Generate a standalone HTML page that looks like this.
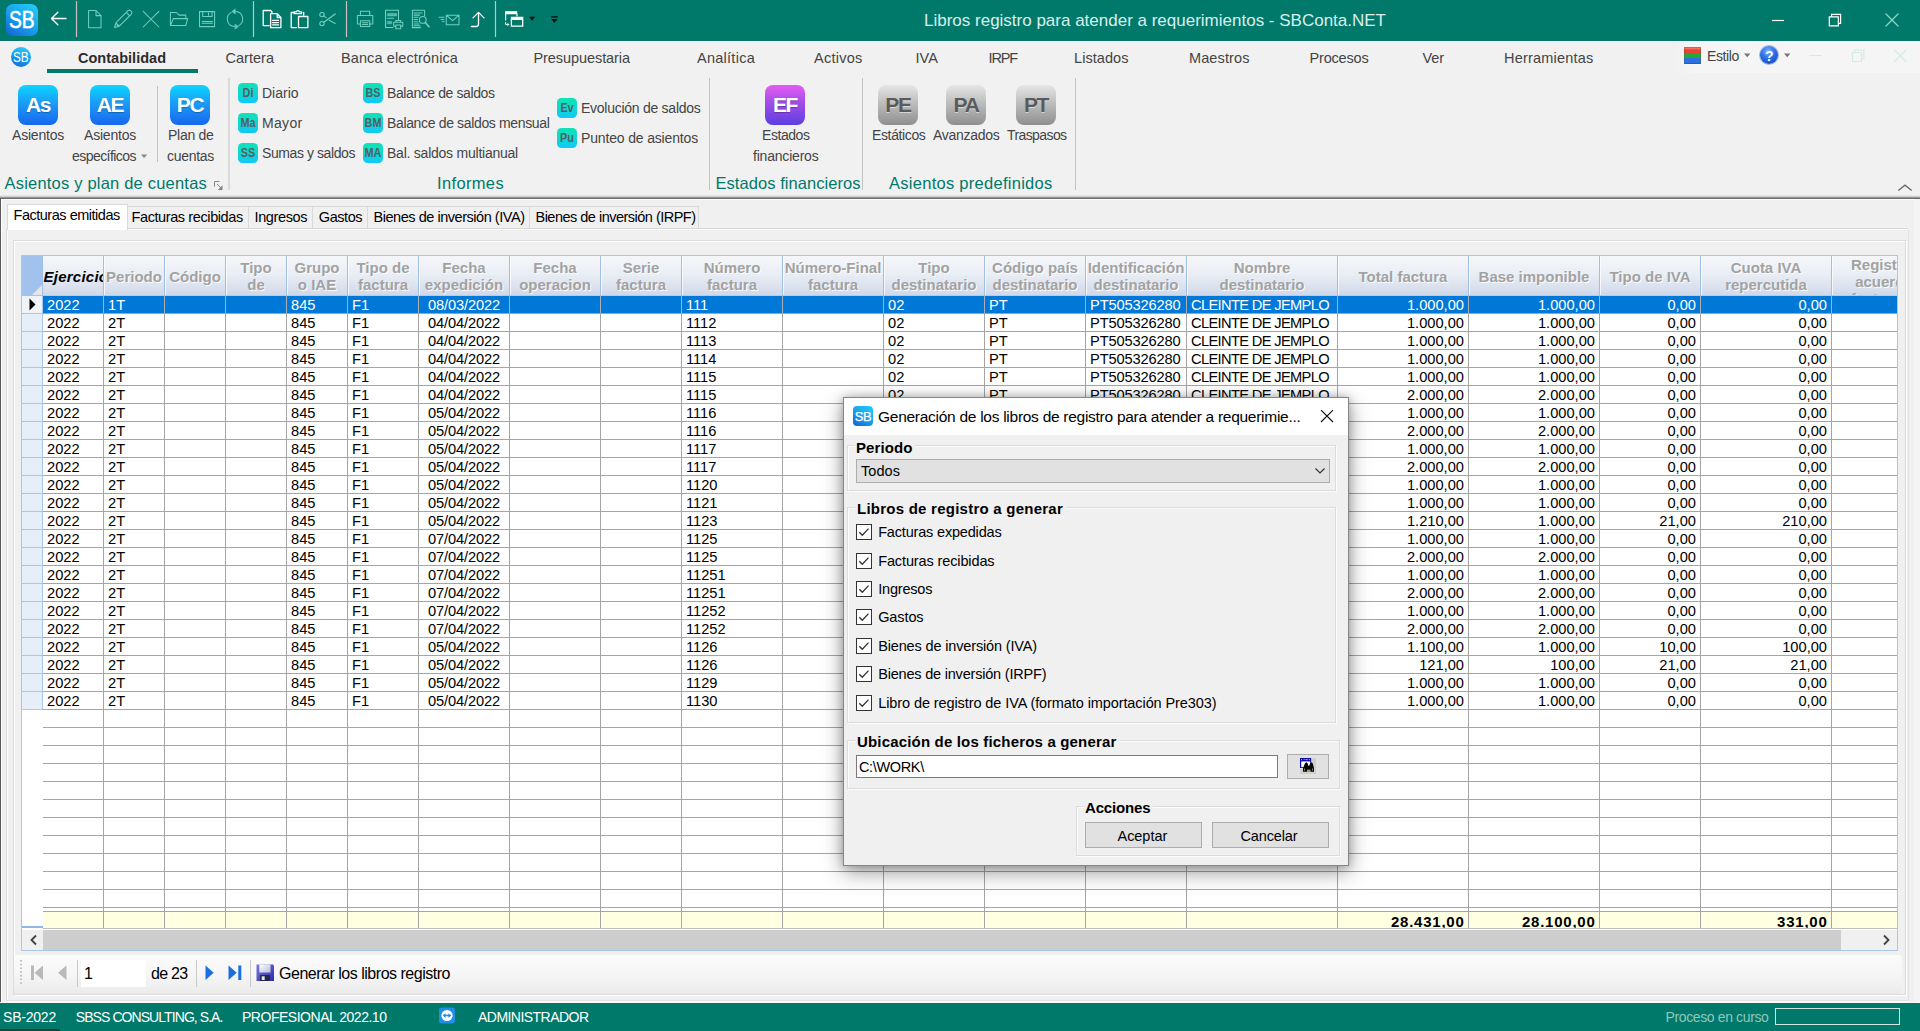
<!DOCTYPE html>
<html lang="es"><head><meta charset="utf-8"><title>Libros registro para atender a requerimientos - SBConta.NET</title>
<style>
html,body{margin:0;padding:0;}
body{width:1920px;height:1031px;overflow:hidden;background:#f0f0f0;position:relative;font-family:"Liberation Sans",sans-serif;}
.t{position:absolute;white-space:pre;}
svg{position:absolute;overflow:visible;}
.abs{position:absolute;}
</style></head><body>

<div class="" style="position:absolute;left:0px;top:0px;width:1920px;height:41px;background:#00796b;"></div>
<div class="" style="position:absolute;left:6px;top:4px;width:32px;height:32px;border-radius:7px;background:linear-gradient(215deg,#25d0f7 0%,#1aa6ee 45%,#1461d6 100%);"></div>
<span class="t" style="left:9.4px;top:6.5px;font-size:23.5px;line-height:26px;color:#fff;transform-origin:0 50%;transform:scaleX(0.817);-webkit-text-stroke:0.550px #fff;">SB</span>
<svg width="1920" height="41" viewBox="0 0 1920 41" style="left:0;top:0" fill="none" stroke-linecap="round" stroke-linejoin="round"><path d="M76.5 1V37" stroke="#cdbfbf" stroke-width="1.2" stroke-linecap="butt"/><path d="M253.5 1V37" stroke="#cdbfbf" stroke-width="1.2" stroke-linecap="butt"/><path d="M346.5 1V37" stroke="#cdbfbf" stroke-width="1.2" stroke-linecap="butt"/><path d="M495.5 1V37" stroke="#cdbfbf" stroke-width="1.2" stroke-linecap="butt"/><path d="M51.500 18.500H66 M57.800 12.200L51.500 18.500L57.800 24.800" stroke="#fff" stroke-width="1.400"/><g stroke="#70cfc0" stroke-width="1.050"><path d="M88.600 10.500h7.400l5 5.100v12.100h-12.400z M96 10.500v5.100h5"/><path d="M114.600 27.500l1.300-4.700L128 10.700a1.900 1.900 0 0 1 2.600 0l.8.800a1.900 1.900 0 0 1 0 2.600L119.300 26.200z M115.900 22.800l3.400 3.400 M117 24.900l1 1 M126.300 12.400l3.400 3.400"/><path d="M143.200 11.400L158.900 27 M158.900 11.400L143.200 27"/><path d="M170.400 25.500V12.500h6l2.600 2.600h6.800v2.900 M170.400 25.500l3-6.900h14.300l-2 6.900z"/><path d="M199.500 11.600h15.100v15h-15.100z M202.700 11.600v4.800h9.300v-4.800 M208.500 13v2.300 M202.200 21.400h10.200 M202.200 23.200h10.200"/><path d="M231.200 12.400A7.600 7.600 0 0 0 234.300 26.600 M238.800 25.600A7.600 7.600 0 0 0 235.700 11.400"/><path d="M235.300 24.200l3 2.400-3 2.400z M235 9l-3 2.400 3 2.400z" fill="#70cfc0" stroke-width="0.600"/></g><g stroke="#fff" stroke-width="1.300"><path d="M269.200 25.600h-6V10.500h7.500l1.200 1.200v1.600 M270.600 13.700h6.600l3.700 3.800v10.200h-10.300z M277.200 13.700v3.800h3.700 M272.500 20.400h6 M272.500 22.600h6 M272.500 24.800h6"/><path d="M294 12.500h-2.800v15.100h5.300 M303.700 12.500v2.600 M294.100 13.600v-1.800h2.300a1.500 1.500 0 0 1 2.900 0h2.300v1.800z M298.500 16.500h9.400v11.100h-9.400z"/></g><g stroke="#70cfc0" stroke-width="1.050"><circle cx="322" cy="14.600" r="2.200"/><circle cx="322" cy="23.600" r="2.200"/><path d="M323.800 22.300L335.200 14" stroke-width="1.300"/><path d="M323.800 15.900l2.600 1.900 M329.200 20.300l6 3.200"/><path d="M360.400 15.500v-4.200h9.300v4.200 M360.400 23.900h-3v-8.400h15.400v8.400h-3 M360.400 20.800h9.300v5.800h-9.300z M362.300 22.700h5.500 M362.300 24.500h5.500"/><path d="M393 27.500h-7.500V10.300h13v9.800 M387.400 18.200h6.200"/><path d="M387.600 13.400h9v2.500h-9z M387.600 21.400h4v2.400h-4z" fill="#70cfc0" fill-opacity="0.700" stroke-width="0.500"/><path d="M395.800 22.200v-1.800h4.900v1.800 M395.800 26.300h-2.100v-4.100h9.100v4.100h-2.100 M395.800 25h4.900v3.700h-4.900z"/><path d="M420.500 27.600h-8.100V10.300h12.200v5.500 M414 12.900h8 M414 15.100h5.500 M414 17.300h4 M414 19.500h3.500 M414 21.700h4 M414 23.900h5 M414 25.700h6"/><circle cx="422.800" cy="19.900" r="3.400"/><path d="M425.300 22.400l3.700 4.400" stroke-width="1.600"/><path d="M446.300 15.200h12.700v9.600h-12.700z M446.300 15.200l6.350 5.500 6.350-5.500 M439.200 17.300h4.800 M441 19.400h3 M442.500 21.500h1.500"/></g><path d="M471.300 26.500h4.700q2.500 0 2.500-2.500V12.500 M473 17.900l5.500-5.500 5.500 5.500" stroke="#fff" stroke-width="1.300"/><g stroke="#fff" stroke-width="1.200" stroke-linejoin="miter" stroke-linecap="butt"><path d="M505.600 11.800h11v1.800h-11z" fill="#fff"/><path d="M505.600 13.600v7 M517 13.600v3"/><path d="M511.400 17.300h11.300v2h-11.300z" fill="#fff"/><path d="M511.400 19.300v6.800h11.300v-6.800" stroke-width="1.300"/><path d="M505.600 22.200v2.300h2.300" stroke-width="1"/><path d="M507.400 22.800l2 1.700-2 1.700z" fill="#fff" stroke="none"/></g><path d="M529 16.800h6.200l-3.100 3.900z" fill="#0c0c0c" stroke="none"/><path d="M551.200 19h6.600l-3.300 3.800z" fill="#0c0c0c" stroke="none"/><path d="M551.200 16.900h6.600" stroke="#0c0c0c" stroke-width="1.300" stroke-linecap="butt"/><path d="M1772 20.500h12" stroke="#fff" stroke-width="1.200" stroke-linecap="butt"/><path d="M1829.300 16.800h9v9h-9z M1831.600 16.600v-2.300h9v9h-2.100" stroke="#fff" stroke-width="1.200" stroke-linejoin="miter"/><path d="M1886 14l12 12 M1898 14l-12 12" stroke="#8fd8cc" stroke-width="1.200"/></svg>
<span class="t " style="left:924.0px;top:9.7px;font-size:17px;line-height:22px;color:#d9efeb;letter-spacing:-0.001px;">Libros registro para atender a requerimientos - SBConta.NET</span>
<div class="" style="position:absolute;left:0px;top:41px;width:1920px;height:155px;background:#f1f1f1;"></div>
<div class="" style="position:absolute;left:0px;top:41px;width:1920px;height:1px;background:#f9f9f9;"></div>
<div class="" style="position:absolute;left:1674px;top:42px;width:246px;height:31px;background:linear-gradient(90deg,#f1f1f1,#f5f5f5 8%,#f5f5f5);"></div>
<div class="" style="position:absolute;left:0px;top:195px;width:1920px;height:4px;background:linear-gradient(#f1f1f1 0%,#dcdcdc 30%,#9a9a9a 62%,#555 100%);"></div>
<div class="" style="position:absolute;left:11px;top:47px;width:20px;height:20px;border-radius:10px;background:linear-gradient(200deg,#2ad3f8 0%,#18a0ec 50%,#1466d8 100%);"></div>
<span class="t" style="left:13.3px;top:49.0px;font-size:14.5px;line-height:16px;color:#fff;transform-origin:0 50%;transform:scaleX(0.812);">SB</span>
<span class="t " style="left:78.0px;top:47.5px;font-size:14.5px;line-height:20px;color:#2b2b2b;letter-spacing:0.017px;font-weight:bold;">Contabilidad</span>
<span class="t " style="left:225.5px;top:47.5px;font-size:14.5px;line-height:20px;color:#444;letter-spacing:0.021px;">Cartera</span>
<span class="t " style="left:341.0px;top:47.5px;font-size:14.5px;line-height:20px;color:#444;letter-spacing:0.102px;">Banca electrónica</span>
<span class="t " style="left:533.5px;top:47.5px;font-size:14.5px;line-height:20px;color:#444;letter-spacing:-0.074px;">Presupuestaria</span>
<span class="t " style="left:697.0px;top:47.5px;font-size:14.5px;line-height:20px;color:#444;letter-spacing:0.265px;">Analítica</span>
<span class="t " style="left:814.0px;top:47.5px;font-size:14.5px;line-height:20px;color:#444;letter-spacing:0.252px;">Activos</span>
<span class="t " style="left:915.5px;top:47.5px;font-size:14.5px;line-height:20px;color:#444;letter-spacing:0.068px;">IVA</span>
<span class="t " style="left:988.5px;top:47.5px;font-size:14.5px;line-height:20px;color:#444;letter-spacing:-1.132px;">IRPF</span>
<span class="t " style="left:1074.0px;top:47.5px;font-size:14.5px;line-height:20px;color:#444;letter-spacing:0.062px;">Listados</span>
<span class="t " style="left:1189.0px;top:47.5px;font-size:14.5px;line-height:20px;color:#444;letter-spacing:0.109px;">Maestros</span>
<span class="t " style="left:1309.5px;top:47.5px;font-size:14.5px;line-height:20px;color:#444;letter-spacing:-0.181px;">Procesos</span>
<span class="t " style="left:1422.5px;top:47.5px;font-size:14.5px;line-height:20px;color:#444;letter-spacing:-0.089px;">Ver</span>
<span class="t " style="left:1504.0px;top:47.5px;font-size:14.5px;line-height:20px;color:#444;letter-spacing:0.206px;">Herramientas</span>
<div class="" style="position:absolute;left:47px;top:69px;width:151px;height:4px;background:#00796b;"></div>
<div class="" style="position:absolute;left:1684px;top:47px;width:17px;height:17px;background:linear-gradient(#e8412f 0%,#e8412f 33%,#22a83a 33%,#22a83a 66%,#2b6fe0 66%,#2b6fe0 100%);box-shadow:inset 0 0 0 1px rgba(0,0,0,.18),inset 0 2px 2px rgba(255,255,255,.35);"></div>
<span class="t " style="left:1707.0px;top:46.5px;font-size:14px;line-height:18px;color:#444;letter-spacing:-0.372px;">Estilo</span>
<svg width="120" height="30" viewBox="1740 40 120 30" style="left:1740px;top:40px"><path d="M1744 53.500h6.400l-3.200 3.800z M1784 53.500h6.400l-3.200 3.800z" fill="#777"/></svg>
<div class="" style="position:absolute;left:1760px;top:46px;width:18px;height:18px;border-radius:9px;background:radial-gradient(circle at 45% 30%,#7db4ff 0%,#2a6de6 45%,#0c3fb0 100%);box-shadow:0 0 0 1px #9db6e0;"></div>
<span class="t " style="left:1765.0px;top:46.5px;font-size:14px;line-height:18px;color:#fff;font-weight:bold;">?</span>
<svg width="120" height="30" viewBox="1800 40 120 30" style="left:1800px;top:40px" fill="none" stroke="#d3ebe6" stroke-width="1.2"><path d="M1809 55.500h13 M1852.500 52.500h9v9h-9z M1854.800 52.300v-2.300h9v9h-2.100 M1894 49.500l12.500 12.500 M1906.500 49.500l-12.500 12.500"/></svg>
<div class="" style="position:absolute;left:18px;top:85px;width:40px;height:40px;border-radius:8px;background:linear-gradient(#0ad6ff 0%,#1c9cf6 45%,#1667ee 100%);"></div>
<span class="t" style="left:18px;top:92px;width:40px;text-align:center;font-size:21px;line-height:26px;font-weight:bold;color:#fff;letter-spacing:-1.300px;text-shadow:0 1px 1px rgba(0,0,0,.25);">As</span>
<div class="" style="position:absolute;left:90px;top:85px;width:40px;height:40px;border-radius:8px;background:linear-gradient(#0ad6ff 0%,#1c9cf6 45%,#1667ee 100%);"></div>
<span class="t" style="left:90px;top:92px;width:40px;text-align:center;font-size:21px;line-height:26px;font-weight:bold;color:#fff;letter-spacing:-1.300px;text-shadow:0 1px 1px rgba(0,0,0,.25);">AE</span>
<div class="" style="position:absolute;left:170px;top:85px;width:40px;height:40px;border-radius:8px;background:linear-gradient(#0ad6ff 0%,#1c9cf6 45%,#1667ee 100%);"></div>
<span class="t" style="left:170px;top:92px;width:40px;text-align:center;font-size:21px;line-height:26px;font-weight:bold;color:#fff;letter-spacing:-1.300px;text-shadow:0 1px 1px rgba(0,0,0,.25);">PC</span>
<div class="" style="position:absolute;left:765px;top:85px;width:40px;height:40px;border-radius:8px;background:linear-gradient(#e35cf3 0%,#a24de8 45%,#5a3fe0 100%);"></div>
<span class="t" style="left:765px;top:92px;width:40px;text-align:center;font-size:21px;line-height:26px;font-weight:bold;color:#fff;letter-spacing:-1.300px;text-shadow:0 1px 1px rgba(0,0,0,.25);">EF</span>
<div class="" style="position:absolute;left:878px;top:85px;width:40px;height:40px;border-radius:8px;background:linear-gradient(#e6e6e6 0%,#bdbdbd 45%,#8f8f8f 100%);"></div>
<span class="t" style="left:878px;top:92px;width:40px;text-align:center;font-size:21px;line-height:26px;font-weight:bold;color:#5a5a5a;letter-spacing:-1.300px;text-shadow:0 1px 0 rgba(255,255,255,.5);">PE</span>
<div class="" style="position:absolute;left:946px;top:85px;width:40px;height:40px;border-radius:8px;background:linear-gradient(#e6e6e6 0%,#bdbdbd 45%,#8f8f8f 100%);"></div>
<span class="t" style="left:946px;top:92px;width:40px;text-align:center;font-size:21px;line-height:26px;font-weight:bold;color:#5a5a5a;letter-spacing:-1.300px;text-shadow:0 1px 0 rgba(255,255,255,.5);">PA</span>
<div class="" style="position:absolute;left:1016px;top:85px;width:40px;height:40px;border-radius:8px;background:linear-gradient(#e6e6e6 0%,#bdbdbd 45%,#8f8f8f 100%);"></div>
<span class="t" style="left:1016px;top:92px;width:40px;text-align:center;font-size:21px;line-height:26px;font-weight:bold;color:#5a5a5a;letter-spacing:-1.300px;text-shadow:0 1px 0 rgba(255,255,255,.5);">PT</span>
<span class="t " style="left:12.0px;top:126.0px;font-size:14px;line-height:18px;color:#444;letter-spacing:-0.212px;">Asientos</span>
<span class="t " style="left:84.0px;top:126.0px;font-size:14px;line-height:18px;color:#444;letter-spacing:-0.212px;">Asientos</span>
<span class="t " style="left:72.0px;top:147.0px;font-size:14px;line-height:18px;color:#444;letter-spacing:-0.549px;">específicos</span>
<span class="t " style="left:168.0px;top:126.0px;font-size:14px;line-height:18px;color:#444;letter-spacing:-0.283px;">Plan de</span>
<span class="t " style="left:167.0px;top:147.0px;font-size:14px;line-height:18px;color:#444;letter-spacing:-0.291px;">cuentas</span>
<span class="t " style="left:762.0px;top:126.0px;font-size:14px;line-height:18px;color:#444;letter-spacing:-0.441px;">Estados</span>
<span class="t " style="left:753.0px;top:147.0px;font-size:14px;line-height:18px;color:#444;letter-spacing:-0.200px;">financieros</span>
<span class="t " style="left:872.0px;top:126.0px;font-size:14px;line-height:18px;color:#444;letter-spacing:-0.367px;">Estáticos</span>
<span class="t " style="left:933.0px;top:126.0px;font-size:14px;line-height:18px;color:#444;letter-spacing:-0.280px;">Avanzados</span>
<span class="t " style="left:1007.0px;top:126.0px;font-size:14px;line-height:18px;color:#444;letter-spacing:-0.593px;">Traspasos</span>
<span class="t " style="left:4.5px;top:171.8px;font-size:16.5px;line-height:22px;color:#00796b;letter-spacing:0.203px;">Asientos y plan de cuentas</span>
<span class="t " style="left:437.0px;top:171.8px;font-size:16.5px;line-height:22px;color:#00796b;letter-spacing:0.351px;">Informes</span>
<span class="t " style="left:715.5px;top:171.8px;font-size:16.5px;line-height:22px;color:#00796b;letter-spacing:0.053px;">Estados financieros</span>
<span class="t " style="left:889.0px;top:171.8px;font-size:16.5px;line-height:22px;color:#00796b;letter-spacing:0.273px;">Asientos predefinidos</span>
<svg width="1920" height="130" viewBox="0 70 1920 130" style="left:0;top:70px" fill="none"><path d="M157.500 86V162 M229 78V190 M709.500 78V190 M862.500 78V190 M1075.500 78V190" stroke="#c3c3c3" stroke-width="1"/><path d="M141 154.500h6.200l-3.100 3.600z" fill="#888"/><path d="M214.500 186.500v-5h5 M217 184l4 4" stroke="#858585" stroke-width="1"/><path d="M222.500 185.300v4.700h-4.700z" fill="#858585"/><path d="M1898.300 190.500l6.700-5.300 6.700 5.300" stroke="#6a6a6a" stroke-width="1.400"/></svg>
<div class="" style="position:absolute;left:238px;top:83px;width:20px;height:20px;border-radius:4.500px;background:linear-gradient(#0fe3b6 0%,#0fd8cf 50%,#10c8fb 100%);"></div>
<span class="t" style="left:233px;top:84.5px;width:30px;text-align:center;font-size:13.500px;line-height:16px;font-weight:bold;color:#4c6262;transform:scaleX(0.800);">Di</span>
<span class="t " style="left:262.0px;top:84.0px;font-size:14px;line-height:18px;color:#444;letter-spacing:-0.011px;">Diario</span>
<div class="" style="position:absolute;left:238px;top:113px;width:20px;height:20px;border-radius:4.500px;background:linear-gradient(#0fe3b6 0%,#0fd8cf 50%,#10c8fb 100%);"></div>
<span class="t" style="left:233px;top:114.5px;width:30px;text-align:center;font-size:13.500px;line-height:16px;font-weight:bold;color:#4c6262;transform:scaleX(0.800);">Ma</span>
<span class="t " style="left:262.0px;top:114.0px;font-size:14px;line-height:18px;color:#444;letter-spacing:0.321px;">Mayor</span>
<div class="" style="position:absolute;left:238px;top:143px;width:20px;height:20px;border-radius:4.500px;background:linear-gradient(#0fe3b6 0%,#0fd8cf 50%,#10c8fb 100%);"></div>
<span class="t" style="left:233px;top:144.5px;width:30px;text-align:center;font-size:13.500px;line-height:16px;font-weight:bold;color:#4c6262;transform:scaleX(0.800);">SS</span>
<span class="t " style="left:262.0px;top:144.0px;font-size:14px;line-height:18px;color:#444;letter-spacing:-0.416px;">Sumas y saldos</span>
<div class="" style="position:absolute;left:363px;top:83px;width:20px;height:20px;border-radius:4.500px;background:linear-gradient(#0fe3b6 0%,#0fd8cf 50%,#10c8fb 100%);"></div>
<span class="t" style="left:358px;top:84.5px;width:30px;text-align:center;font-size:13.500px;line-height:16px;font-weight:bold;color:#4c6262;transform:scaleX(0.800);">BS</span>
<span class="t " style="left:387.0px;top:84.0px;font-size:14px;line-height:18px;color:#444;letter-spacing:-0.407px;">Balance de saldos</span>
<div class="" style="position:absolute;left:363px;top:113px;width:20px;height:20px;border-radius:4.500px;background:linear-gradient(#0fe3b6 0%,#0fd8cf 50%,#10c8fb 100%);"></div>
<span class="t" style="left:358px;top:114.5px;width:30px;text-align:center;font-size:13.500px;line-height:16px;font-weight:bold;color:#4c6262;transform:scaleX(0.800);">BM</span>
<span class="t " style="left:387.0px;top:114.0px;font-size:14px;line-height:18px;color:#444;letter-spacing:-0.349px;">Balance de saldos mensual</span>
<div class="" style="position:absolute;left:363px;top:143px;width:20px;height:20px;border-radius:4.500px;background:linear-gradient(#0fe3b6 0%,#0fd8cf 50%,#10c8fb 100%);"></div>
<span class="t" style="left:358px;top:144.5px;width:30px;text-align:center;font-size:13.500px;line-height:16px;font-weight:bold;color:#4c6262;transform:scaleX(0.800);">MA</span>
<span class="t " style="left:387.0px;top:144.0px;font-size:14px;line-height:18px;color:#444;letter-spacing:-0.236px;">Bal. saldos multianual</span>
<div class="" style="position:absolute;left:557px;top:98px;width:20px;height:20px;border-radius:4.500px;background:linear-gradient(#0fe3b6 0%,#0fd8cf 50%,#10c8fb 100%);"></div>
<span class="t" style="left:552px;top:99.5px;width:30px;text-align:center;font-size:13.500px;line-height:16px;font-weight:bold;color:#4c6262;transform:scaleX(0.800);">Ev</span>
<span class="t " style="left:581.0px;top:99.0px;font-size:14px;line-height:18px;color:#444;letter-spacing:-0.264px;">Evolución de saldos</span>
<div class="" style="position:absolute;left:557px;top:128px;width:20px;height:20px;border-radius:4.500px;background:linear-gradient(#0fe3b6 0%,#0fd8cf 50%,#10c8fb 100%);"></div>
<span class="t" style="left:552px;top:129.5px;width:30px;text-align:center;font-size:13.500px;line-height:16px;font-weight:bold;color:#4c6262;transform:scaleX(0.800);">Pu</span>
<span class="t " style="left:581.0px;top:129.0px;font-size:14px;line-height:18px;color:#444;letter-spacing:-0.159px;">Punteo de asientos</span>
<div class="" style="position:absolute;left:0px;top:198px;width:1px;height:805px;background:#5a5a5a;"></div>
<div class="" style="position:absolute;left:1px;top:199px;width:1919px;height:1px;background:#fff;"></div>
<div class="" style="position:absolute;left:1px;top:199px;width:1px;height:803px;background:#fff;"></div>
<div class="" style="position:absolute;left:7px;top:228px;width:1901px;height:1px;background:#d9d9d9;"></div>
<div class="" style="position:absolute;left:7px;top:229px;width:1901px;height:1px;background:#fff;"></div>
<div class="" style="position:absolute;left:6px;top:229px;width:1px;height:771px;background:#dadada;"></div>
<div class="" style="position:absolute;left:7px;top:229px;width:1px;height:771px;background:#fff;"></div>
<div class="" style="position:absolute;left:1908px;top:229px;width:1px;height:771px;background:#e3e3e3;"></div>
<div class="" style="position:absolute;left:1914px;top:199px;width:6px;height:803px;background:#f4f4f4;"></div>
<div class="" style="position:absolute;left:127px;top:206px;width:122px;height:22px;background:#f0f0f0;border-top:1px solid #d9d9d9;border-right:1px solid #d9d9d9;box-sizing:border-box;"></div>
<span class="t " style="left:131.5px;top:208.0px;font-size:14.5px;line-height:18px;color:#000;letter-spacing:-0.398px;">Facturas recibidas</span>
<div class="" style="position:absolute;left:249px;top:206px;width:64px;height:22px;background:#f0f0f0;border-top:1px solid #d9d9d9;border-right:1px solid #d9d9d9;box-sizing:border-box;"></div>
<span class="t " style="left:254.5px;top:208.0px;font-size:14.5px;line-height:18px;color:#000;letter-spacing:-0.364px;">Ingresos</span>
<div class="" style="position:absolute;left:313px;top:206px;width:55px;height:22px;background:#f0f0f0;border-top:1px solid #d9d9d9;border-right:1px solid #d9d9d9;box-sizing:border-box;"></div>
<span class="t " style="left:318.8px;top:208.0px;font-size:14.5px;line-height:18px;color:#000;letter-spacing:-0.423px;">Gastos</span>
<div class="" style="position:absolute;left:368px;top:206px;width:162px;height:22px;background:#f0f0f0;border-top:1px solid #d9d9d9;border-right:1px solid #d9d9d9;box-sizing:border-box;"></div>
<span class="t " style="left:373.5px;top:208.0px;font-size:14.5px;line-height:18px;color:#000;letter-spacing:-0.461px;">Bienes de inversión (IVA)</span>
<div class="" style="position:absolute;left:530px;top:206px;width:169px;height:22px;background:#f0f0f0;border-top:1px solid #d9d9d9;border-right:1px solid #d9d9d9;box-sizing:border-box;"></div>
<span class="t " style="left:535.5px;top:208.0px;font-size:14.5px;line-height:18px;color:#000;letter-spacing:-0.510px;">Bienes de inversión (IRPF)</span>
<div class="" style="position:absolute;left:7px;top:204px;width:121px;height:26px;background:#fff;border:1px solid #d9d9d9;border-bottom:none;box-sizing:border-box;"></div>
<span class="t " style="left:13.5px;top:206.0px;font-size:14.5px;line-height:18px;color:#000;letter-spacing:-0.478px;">Facturas emitidas</span>
<div class="" style="position:absolute;left:13px;top:240px;width:1893px;height:755px;border:1px solid #dcdcdc;box-sizing:border-box;box-shadow:inset 1px 1px 0 #fff, 1px 1px 0 #fff;"></div>
<div class="" style="position:absolute;left:21px;top:255px;width:1877px;height:696px;background:#fff;border:1px solid #a9c6ec;box-sizing:border-box;"></div>
<div class="" style="position:absolute;left:43px;top:256px;width:1854px;height:40px;background:linear-gradient(#f5f6f9 0%,#eaeef5 45%,#dae1ee 80%,#d0d9e9 100%);border-bottom:1px solid #b8cbe4;box-sizing:border-box;"></div>
<div class="" style="position:absolute;left:22px;top:256px;width:21px;height:40px;background:#a0c2ec;"></div>
<svg width="21" height="40" style="left:22px;top:256px"><path d="M20 29v10H10z" fill="#e6e6ea"/></svg>
<div class="" style="position:absolute;left:103px;top:256px;width:1px;height:40px;background:#9dbfe8;"></div>
<div class="" style="position:absolute;left:104px;top:256px;width:1px;height:39px;background:rgba(255,255,255,.7);"></div>
<div class="" style="position:absolute;left:164px;top:256px;width:1px;height:40px;background:#9dbfe8;"></div>
<div class="" style="position:absolute;left:165px;top:256px;width:1px;height:39px;background:rgba(255,255,255,.7);"></div>
<div class="" style="position:absolute;left:225px;top:256px;width:1px;height:40px;background:#9dbfe8;"></div>
<div class="" style="position:absolute;left:226px;top:256px;width:1px;height:39px;background:rgba(255,255,255,.7);"></div>
<div class="" style="position:absolute;left:286px;top:256px;width:1px;height:40px;background:#9dbfe8;"></div>
<div class="" style="position:absolute;left:287px;top:256px;width:1px;height:39px;background:rgba(255,255,255,.7);"></div>
<div class="" style="position:absolute;left:347px;top:256px;width:1px;height:40px;background:#9dbfe8;"></div>
<div class="" style="position:absolute;left:348px;top:256px;width:1px;height:39px;background:rgba(255,255,255,.7);"></div>
<div class="" style="position:absolute;left:418px;top:256px;width:1px;height:40px;background:#9dbfe8;"></div>
<div class="" style="position:absolute;left:419px;top:256px;width:1px;height:39px;background:rgba(255,255,255,.7);"></div>
<div class="" style="position:absolute;left:509px;top:256px;width:1px;height:40px;background:#9dbfe8;"></div>
<div class="" style="position:absolute;left:510px;top:256px;width:1px;height:39px;background:rgba(255,255,255,.7);"></div>
<div class="" style="position:absolute;left:600px;top:256px;width:1px;height:40px;background:#9dbfe8;"></div>
<div class="" style="position:absolute;left:601px;top:256px;width:1px;height:39px;background:rgba(255,255,255,.7);"></div>
<div class="" style="position:absolute;left:681px;top:256px;width:1px;height:40px;background:#9dbfe8;"></div>
<div class="" style="position:absolute;left:682px;top:256px;width:1px;height:39px;background:rgba(255,255,255,.7);"></div>
<div class="" style="position:absolute;left:782px;top:256px;width:1px;height:40px;background:#9dbfe8;"></div>
<div class="" style="position:absolute;left:783px;top:256px;width:1px;height:39px;background:rgba(255,255,255,.7);"></div>
<div class="" style="position:absolute;left:883px;top:256px;width:1px;height:40px;background:#9dbfe8;"></div>
<div class="" style="position:absolute;left:884px;top:256px;width:1px;height:39px;background:rgba(255,255,255,.7);"></div>
<div class="" style="position:absolute;left:984px;top:256px;width:1px;height:40px;background:#9dbfe8;"></div>
<div class="" style="position:absolute;left:985px;top:256px;width:1px;height:39px;background:rgba(255,255,255,.7);"></div>
<div class="" style="position:absolute;left:1085px;top:256px;width:1px;height:40px;background:#9dbfe8;"></div>
<div class="" style="position:absolute;left:1086px;top:256px;width:1px;height:39px;background:rgba(255,255,255,.7);"></div>
<div class="" style="position:absolute;left:1186px;top:256px;width:1px;height:40px;background:#9dbfe8;"></div>
<div class="" style="position:absolute;left:1187px;top:256px;width:1px;height:39px;background:rgba(255,255,255,.7);"></div>
<div class="" style="position:absolute;left:1337px;top:256px;width:1px;height:40px;background:#9dbfe8;"></div>
<div class="" style="position:absolute;left:1338px;top:256px;width:1px;height:39px;background:rgba(255,255,255,.7);"></div>
<div class="" style="position:absolute;left:1468px;top:256px;width:1px;height:40px;background:#9dbfe8;"></div>
<div class="" style="position:absolute;left:1469px;top:256px;width:1px;height:39px;background:rgba(255,255,255,.7);"></div>
<div class="" style="position:absolute;left:1599px;top:256px;width:1px;height:40px;background:#9dbfe8;"></div>
<div class="" style="position:absolute;left:1600px;top:256px;width:1px;height:39px;background:rgba(255,255,255,.7);"></div>
<div class="" style="position:absolute;left:1700px;top:256px;width:1px;height:40px;background:#9dbfe8;"></div>
<div class="" style="position:absolute;left:1701px;top:256px;width:1px;height:39px;background:rgba(255,255,255,.7);"></div>
<div class="" style="position:absolute;left:1831px;top:256px;width:1px;height:40px;background:#9dbfe8;"></div>
<div class="" style="position:absolute;left:1832px;top:256px;width:1px;height:39px;background:rgba(255,255,255,.7);"></div>
<div class="" style="position:absolute;left:42px;top:256px;width:1px;height:40px;background:#9dbfe8;"></div>
<div class="abs" style="left:43px;top:256px;width:60px;height:39px;overflow:hidden;font-size:15px;font-weight:bold;text-align:center;white-space:nowrap;overflow:hidden;text-shadow:1px 1px 0 rgba(255,255,255,.9);text-align:left;color:#000;font-style:italic;line-height:41px;text-shadow:none;letter-spacing:0.250px;"><span style="margin-left:0.500px">Ejercicio</span></div>
<div class="abs" style="left:104px;top:256px;width:60px;height:39px;line-height:42px;color:#a2a2a2;font-size:15px;font-weight:bold;text-align:center;white-space:nowrap;overflow:hidden;text-shadow:1px 1px 0 rgba(255,255,255,.9);">Periodo</div>
<div class="abs" style="left:165px;top:256px;width:60px;height:39px;line-height:42px;color:#a2a2a2;font-size:15px;font-weight:bold;text-align:center;white-space:nowrap;overflow:hidden;text-shadow:1px 1px 0 rgba(255,255,255,.9);">Código</div>
<div class="abs" style="left:226px;top:259px;width:60px;height:36px;line-height:17px;color:#a2a2a2;font-size:15px;font-weight:bold;text-align:center;white-space:nowrap;overflow:hidden;text-shadow:1px 1px 0 rgba(255,255,255,.9);">Tipo<br>de</div>
<div class="abs" style="left:287px;top:259px;width:60px;height:36px;line-height:17px;color:#a2a2a2;font-size:15px;font-weight:bold;text-align:center;white-space:nowrap;overflow:hidden;text-shadow:1px 1px 0 rgba(255,255,255,.9);">Grupo<br>o IAE</div>
<div class="abs" style="left:348px;top:259px;width:70px;height:36px;line-height:17px;color:#a2a2a2;font-size:15px;font-weight:bold;text-align:center;white-space:nowrap;overflow:hidden;text-shadow:1px 1px 0 rgba(255,255,255,.9);">Tipo de<br>factura</div>
<div class="abs" style="left:419px;top:259px;width:90px;height:36px;line-height:17px;color:#a2a2a2;font-size:15px;font-weight:bold;text-align:center;white-space:nowrap;overflow:hidden;text-shadow:1px 1px 0 rgba(255,255,255,.9);">Fecha<br>expedición</div>
<div class="abs" style="left:510px;top:259px;width:90px;height:36px;line-height:17px;color:#a2a2a2;font-size:15px;font-weight:bold;text-align:center;white-space:nowrap;overflow:hidden;text-shadow:1px 1px 0 rgba(255,255,255,.9);">Fecha<br>operacion</div>
<div class="abs" style="left:601px;top:259px;width:80px;height:36px;line-height:17px;color:#a2a2a2;font-size:15px;font-weight:bold;text-align:center;white-space:nowrap;overflow:hidden;text-shadow:1px 1px 0 rgba(255,255,255,.9);">Serie<br>factura</div>
<div class="abs" style="left:682px;top:259px;width:100px;height:36px;line-height:17px;color:#a2a2a2;font-size:15px;font-weight:bold;text-align:center;white-space:nowrap;overflow:hidden;text-shadow:1px 1px 0 rgba(255,255,255,.9);">Número<br>factura</div>
<div class="abs" style="left:783px;top:259px;width:100px;height:36px;line-height:17px;color:#a2a2a2;font-size:15px;font-weight:bold;text-align:center;white-space:nowrap;overflow:hidden;text-shadow:1px 1px 0 rgba(255,255,255,.9);">Número-Final<br>factura</div>
<div class="abs" style="left:884px;top:259px;width:100px;height:36px;line-height:17px;color:#a2a2a2;font-size:15px;font-weight:bold;text-align:center;white-space:nowrap;overflow:hidden;text-shadow:1px 1px 0 rgba(255,255,255,.9);">Tipo<br>destinatario</div>
<div class="abs" style="left:985px;top:259px;width:100px;height:36px;line-height:17px;color:#a2a2a2;font-size:15px;font-weight:bold;text-align:center;white-space:nowrap;overflow:hidden;text-shadow:1px 1px 0 rgba(255,255,255,.9);">Código país<br>destinatario</div>
<div class="abs" style="left:1086px;top:259px;width:100px;height:36px;line-height:17px;color:#a2a2a2;font-size:15px;font-weight:bold;text-align:center;white-space:nowrap;overflow:hidden;text-shadow:1px 1px 0 rgba(255,255,255,.9);">Identificación<br>destinatario</div>
<div class="abs" style="left:1187px;top:259px;width:150px;height:36px;line-height:17px;color:#a2a2a2;font-size:15px;font-weight:bold;text-align:center;white-space:nowrap;overflow:hidden;text-shadow:1px 1px 0 rgba(255,255,255,.9);">Nombre<br>destinatario</div>
<div class="abs" style="left:1338px;top:256px;width:130px;height:39px;line-height:42px;color:#a2a2a2;font-size:15px;font-weight:bold;text-align:center;white-space:nowrap;overflow:hidden;text-shadow:1px 1px 0 rgba(255,255,255,.9);">Total factura</div>
<div class="abs" style="left:1469px;top:256px;width:130px;height:39px;line-height:42px;color:#a2a2a2;font-size:15px;font-weight:bold;text-align:center;white-space:nowrap;overflow:hidden;text-shadow:1px 1px 0 rgba(255,255,255,.9);">Base imponible</div>
<div class="abs" style="left:1600px;top:256px;width:100px;height:39px;line-height:42px;color:#a2a2a2;font-size:15px;font-weight:bold;text-align:center;white-space:nowrap;overflow:hidden;text-shadow:1px 1px 0 rgba(255,255,255,.9);">Tipo de IVA</div>
<div class="abs" style="left:1701px;top:259px;width:130px;height:36px;line-height:17px;color:#a2a2a2;font-size:15px;font-weight:bold;text-align:center;white-space:nowrap;overflow:hidden;text-shadow:1px 1px 0 rgba(255,255,255,.9);">Cuota IVA<br>repercutida</div>
<div class="abs" style="left:1832px;top:256px;width:65px;height:39px;overflow:hidden;color:#a2a2a2;font-size:15px;font-weight:bold;text-align:center;white-space:nowrap;overflow:hidden;text-shadow:1px 1px 0 rgba(255,255,255,.9);text-align:left;line-height:17px;"><div style="margin:0 0 0 19px;position:relative;top:0px">Registro<br>&nbsp;acuerdo<br>facturación</div></div>
<div class="" style="position:absolute;left:43px;top:296px;width:1854px;height:612px;background:repeating-linear-gradient(#fff 0px,#fff 17px,#a5a5a5 17px,#a5a5a5 18px);"></div>
<div class="" style="position:absolute;left:43px;top:908px;width:1854px;height:3px;background:#fff;"></div>
<div class="" style="position:absolute;left:43px;top:911px;width:1854px;height:1px;background:#a5a5a5;"></div>
<div class="" style="position:absolute;left:43px;top:912px;width:1854px;height:16px;background:#ffffe1;"></div>
<div class="" style="position:absolute;left:43px;top:928px;width:1854px;height:1px;background:#bdbdbd;"></div>
<div class="" style="position:absolute;left:103px;top:296px;width:1px;height:632px;background:#a5a5a5;"></div>
<div class="" style="position:absolute;left:164px;top:296px;width:1px;height:632px;background:#a5a5a5;"></div>
<div class="" style="position:absolute;left:225px;top:296px;width:1px;height:632px;background:#a5a5a5;"></div>
<div class="" style="position:absolute;left:286px;top:296px;width:1px;height:632px;background:#a5a5a5;"></div>
<div class="" style="position:absolute;left:347px;top:296px;width:1px;height:632px;background:#a5a5a5;"></div>
<div class="" style="position:absolute;left:418px;top:296px;width:1px;height:632px;background:#a5a5a5;"></div>
<div class="" style="position:absolute;left:509px;top:296px;width:1px;height:632px;background:#a5a5a5;"></div>
<div class="" style="position:absolute;left:600px;top:296px;width:1px;height:632px;background:#a5a5a5;"></div>
<div class="" style="position:absolute;left:681px;top:296px;width:1px;height:632px;background:#a5a5a5;"></div>
<div class="" style="position:absolute;left:782px;top:296px;width:1px;height:632px;background:#a5a5a5;"></div>
<div class="" style="position:absolute;left:883px;top:296px;width:1px;height:632px;background:#a5a5a5;"></div>
<div class="" style="position:absolute;left:984px;top:296px;width:1px;height:632px;background:#a5a5a5;"></div>
<div class="" style="position:absolute;left:1085px;top:296px;width:1px;height:632px;background:#a5a5a5;"></div>
<div class="" style="position:absolute;left:1186px;top:296px;width:1px;height:632px;background:#a5a5a5;"></div>
<div class="" style="position:absolute;left:1337px;top:296px;width:1px;height:632px;background:#a5a5a5;"></div>
<div class="" style="position:absolute;left:1468px;top:296px;width:1px;height:632px;background:#a5a5a5;"></div>
<div class="" style="position:absolute;left:1599px;top:296px;width:1px;height:632px;background:#a5a5a5;"></div>
<div class="" style="position:absolute;left:1700px;top:296px;width:1px;height:632px;background:#a5a5a5;"></div>
<div class="" style="position:absolute;left:1831px;top:296px;width:1px;height:632px;background:#a5a5a5;"></div>
<div class="" style="position:absolute;left:43px;top:296px;width:1854px;height:17px;background:#0078d7;"></div>
<div class="" style="position:absolute;left:103px;top:296px;width:1px;height:17px;background:#a9aeb8;"></div>
<div class="" style="position:absolute;left:164px;top:296px;width:1px;height:17px;background:#a9aeb8;"></div>
<div class="" style="position:absolute;left:225px;top:296px;width:1px;height:17px;background:#a9aeb8;"></div>
<div class="" style="position:absolute;left:286px;top:296px;width:1px;height:17px;background:#a9aeb8;"></div>
<div class="" style="position:absolute;left:347px;top:296px;width:1px;height:17px;background:#a9aeb8;"></div>
<div class="" style="position:absolute;left:418px;top:296px;width:1px;height:17px;background:#a9aeb8;"></div>
<div class="" style="position:absolute;left:509px;top:296px;width:1px;height:17px;background:#a9aeb8;"></div>
<div class="" style="position:absolute;left:600px;top:296px;width:1px;height:17px;background:#a9aeb8;"></div>
<div class="" style="position:absolute;left:681px;top:296px;width:1px;height:17px;background:#a9aeb8;"></div>
<div class="" style="position:absolute;left:782px;top:296px;width:1px;height:17px;background:#a9aeb8;"></div>
<div class="" style="position:absolute;left:883px;top:296px;width:1px;height:17px;background:#a9aeb8;"></div>
<div class="" style="position:absolute;left:984px;top:296px;width:1px;height:17px;background:#a9aeb8;"></div>
<div class="" style="position:absolute;left:1085px;top:296px;width:1px;height:17px;background:#a9aeb8;"></div>
<div class="" style="position:absolute;left:1186px;top:296px;width:1px;height:17px;background:#a9aeb8;"></div>
<div class="" style="position:absolute;left:1337px;top:296px;width:1px;height:17px;background:#a9aeb8;"></div>
<div class="" style="position:absolute;left:1468px;top:296px;width:1px;height:17px;background:#a9aeb8;"></div>
<div class="" style="position:absolute;left:1599px;top:296px;width:1px;height:17px;background:#a9aeb8;"></div>
<div class="" style="position:absolute;left:1700px;top:296px;width:1px;height:17px;background:#a9aeb8;"></div>
<div class="" style="position:absolute;left:1831px;top:296px;width:1px;height:17px;background:#a9aeb8;"></div>
<div class="" style="position:absolute;left:22px;top:296px;width:21px;height:414px;background:repeating-linear-gradient(#e6eef9 0px,#e6eef9 17px,#a9c6ec 17px,#a9c6ec 18px);border-right:1px solid #a9c6ec;box-sizing:border-box;"></div>
<div class="" style="position:absolute;left:22px;top:296px;width:21px;height:17px;background:#f0f4fa;border-right:1px solid #a9c6ec;box-sizing:border-box;"></div>
<svg width="10" height="14" style="left:29px;top:298px"><path d="M0.500 0.500l6 6-6 6z" fill="#000"/></svg>
<div class="" style="position:absolute;left:22px;top:926px;width:21px;height:2px;background:#8fb8ea;"></div>
<span class="t" style="left:47px;top:296px;font-size:14.670px;line-height:18px;color:#fff;">2022</span>
<span class="t" style="left:108px;top:296px;font-size:14.670px;line-height:18px;color:#fff;">1T</span>
<span class="t" style="left:291px;top:296px;font-size:14.670px;line-height:18px;color:#fff;">845</span>
<span class="t" style="left:352px;top:296px;font-size:14.670px;line-height:18px;color:#fff;">F1</span>
<span class="t" style="left:419px;width:90px;text-align:center;top:296px;font-size:14.670px;line-height:18px;color:#fff;letter-spacing:-0.150px;">08/03/2022</span>
<span class="t" style="left:686px;top:296px;font-size:14.670px;line-height:18px;color:#fff;">111</span>
<span class="t" style="left:888px;top:296px;font-size:14.670px;line-height:18px;color:#fff;">02</span>
<span class="t" style="left:989px;top:296px;font-size:14.670px;line-height:18px;color:#fff;">PT</span>
<span class="t" style="left:1090px;top:296px;font-size:14.670px;line-height:18px;color:#fff;letter-spacing:-0.150px;">PT505326280</span>
<span class="t" style="left:1191px;top:296px;font-size:14.670px;line-height:18px;color:#fff;letter-spacing:-0.650px;">CLEINTE DE JEMPLO</span>
<span class="t" style="left:1338px;width:126px;text-align:right;top:296px;font-size:14.670px;line-height:18px;color:#fff;">1.000,00</span>
<span class="t" style="left:1469px;width:126px;text-align:right;top:296px;font-size:14.670px;line-height:18px;color:#fff;">1.000,00</span>
<span class="t" style="left:1600px;width:96px;text-align:right;top:296px;font-size:14.670px;line-height:18px;color:#fff;">0,00</span>
<span class="t" style="left:1701px;width:126px;text-align:right;top:296px;font-size:14.670px;line-height:18px;color:#fff;">0,00</span>
<span class="t" style="left:47px;top:314px;font-size:14.670px;line-height:18px;color:#000;">2022</span>
<span class="t" style="left:108px;top:314px;font-size:14.670px;line-height:18px;color:#000;">2T</span>
<span class="t" style="left:291px;top:314px;font-size:14.670px;line-height:18px;color:#000;">845</span>
<span class="t" style="left:352px;top:314px;font-size:14.670px;line-height:18px;color:#000;">F1</span>
<span class="t" style="left:419px;width:90px;text-align:center;top:314px;font-size:14.670px;line-height:18px;color:#000;letter-spacing:-0.150px;">04/04/2022</span>
<span class="t" style="left:686px;top:314px;font-size:14.670px;line-height:18px;color:#000;">1112</span>
<span class="t" style="left:888px;top:314px;font-size:14.670px;line-height:18px;color:#000;">02</span>
<span class="t" style="left:989px;top:314px;font-size:14.670px;line-height:18px;color:#000;">PT</span>
<span class="t" style="left:1090px;top:314px;font-size:14.670px;line-height:18px;color:#000;letter-spacing:-0.150px;">PT505326280</span>
<span class="t" style="left:1191px;top:314px;font-size:14.670px;line-height:18px;color:#000;letter-spacing:-0.650px;">CLEINTE DE JEMPLO</span>
<span class="t" style="left:1338px;width:126px;text-align:right;top:314px;font-size:14.670px;line-height:18px;color:#000;">1.000,00</span>
<span class="t" style="left:1469px;width:126px;text-align:right;top:314px;font-size:14.670px;line-height:18px;color:#000;">1.000,00</span>
<span class="t" style="left:1600px;width:96px;text-align:right;top:314px;font-size:14.670px;line-height:18px;color:#000;">0,00</span>
<span class="t" style="left:1701px;width:126px;text-align:right;top:314px;font-size:14.670px;line-height:18px;color:#000;">0,00</span>
<span class="t" style="left:47px;top:332px;font-size:14.670px;line-height:18px;color:#000;">2022</span>
<span class="t" style="left:108px;top:332px;font-size:14.670px;line-height:18px;color:#000;">2T</span>
<span class="t" style="left:291px;top:332px;font-size:14.670px;line-height:18px;color:#000;">845</span>
<span class="t" style="left:352px;top:332px;font-size:14.670px;line-height:18px;color:#000;">F1</span>
<span class="t" style="left:419px;width:90px;text-align:center;top:332px;font-size:14.670px;line-height:18px;color:#000;letter-spacing:-0.150px;">04/04/2022</span>
<span class="t" style="left:686px;top:332px;font-size:14.670px;line-height:18px;color:#000;">1113</span>
<span class="t" style="left:888px;top:332px;font-size:14.670px;line-height:18px;color:#000;">02</span>
<span class="t" style="left:989px;top:332px;font-size:14.670px;line-height:18px;color:#000;">PT</span>
<span class="t" style="left:1090px;top:332px;font-size:14.670px;line-height:18px;color:#000;letter-spacing:-0.150px;">PT505326280</span>
<span class="t" style="left:1191px;top:332px;font-size:14.670px;line-height:18px;color:#000;letter-spacing:-0.650px;">CLEINTE DE JEMPLO</span>
<span class="t" style="left:1338px;width:126px;text-align:right;top:332px;font-size:14.670px;line-height:18px;color:#000;">1.000,00</span>
<span class="t" style="left:1469px;width:126px;text-align:right;top:332px;font-size:14.670px;line-height:18px;color:#000;">1.000,00</span>
<span class="t" style="left:1600px;width:96px;text-align:right;top:332px;font-size:14.670px;line-height:18px;color:#000;">0,00</span>
<span class="t" style="left:1701px;width:126px;text-align:right;top:332px;font-size:14.670px;line-height:18px;color:#000;">0,00</span>
<span class="t" style="left:47px;top:350px;font-size:14.670px;line-height:18px;color:#000;">2022</span>
<span class="t" style="left:108px;top:350px;font-size:14.670px;line-height:18px;color:#000;">2T</span>
<span class="t" style="left:291px;top:350px;font-size:14.670px;line-height:18px;color:#000;">845</span>
<span class="t" style="left:352px;top:350px;font-size:14.670px;line-height:18px;color:#000;">F1</span>
<span class="t" style="left:419px;width:90px;text-align:center;top:350px;font-size:14.670px;line-height:18px;color:#000;letter-spacing:-0.150px;">04/04/2022</span>
<span class="t" style="left:686px;top:350px;font-size:14.670px;line-height:18px;color:#000;">1114</span>
<span class="t" style="left:888px;top:350px;font-size:14.670px;line-height:18px;color:#000;">02</span>
<span class="t" style="left:989px;top:350px;font-size:14.670px;line-height:18px;color:#000;">PT</span>
<span class="t" style="left:1090px;top:350px;font-size:14.670px;line-height:18px;color:#000;letter-spacing:-0.150px;">PT505326280</span>
<span class="t" style="left:1191px;top:350px;font-size:14.670px;line-height:18px;color:#000;letter-spacing:-0.650px;">CLEINTE DE JEMPLO</span>
<span class="t" style="left:1338px;width:126px;text-align:right;top:350px;font-size:14.670px;line-height:18px;color:#000;">1.000,00</span>
<span class="t" style="left:1469px;width:126px;text-align:right;top:350px;font-size:14.670px;line-height:18px;color:#000;">1.000,00</span>
<span class="t" style="left:1600px;width:96px;text-align:right;top:350px;font-size:14.670px;line-height:18px;color:#000;">0,00</span>
<span class="t" style="left:1701px;width:126px;text-align:right;top:350px;font-size:14.670px;line-height:18px;color:#000;">0,00</span>
<span class="t" style="left:47px;top:368px;font-size:14.670px;line-height:18px;color:#000;">2022</span>
<span class="t" style="left:108px;top:368px;font-size:14.670px;line-height:18px;color:#000;">2T</span>
<span class="t" style="left:291px;top:368px;font-size:14.670px;line-height:18px;color:#000;">845</span>
<span class="t" style="left:352px;top:368px;font-size:14.670px;line-height:18px;color:#000;">F1</span>
<span class="t" style="left:419px;width:90px;text-align:center;top:368px;font-size:14.670px;line-height:18px;color:#000;letter-spacing:-0.150px;">04/04/2022</span>
<span class="t" style="left:686px;top:368px;font-size:14.670px;line-height:18px;color:#000;">1115</span>
<span class="t" style="left:888px;top:368px;font-size:14.670px;line-height:18px;color:#000;">02</span>
<span class="t" style="left:989px;top:368px;font-size:14.670px;line-height:18px;color:#000;">PT</span>
<span class="t" style="left:1090px;top:368px;font-size:14.670px;line-height:18px;color:#000;letter-spacing:-0.150px;">PT505326280</span>
<span class="t" style="left:1191px;top:368px;font-size:14.670px;line-height:18px;color:#000;letter-spacing:-0.650px;">CLEINTE DE JEMPLO</span>
<span class="t" style="left:1338px;width:126px;text-align:right;top:368px;font-size:14.670px;line-height:18px;color:#000;">1.000,00</span>
<span class="t" style="left:1469px;width:126px;text-align:right;top:368px;font-size:14.670px;line-height:18px;color:#000;">1.000,00</span>
<span class="t" style="left:1600px;width:96px;text-align:right;top:368px;font-size:14.670px;line-height:18px;color:#000;">0,00</span>
<span class="t" style="left:1701px;width:126px;text-align:right;top:368px;font-size:14.670px;line-height:18px;color:#000;">0,00</span>
<span class="t" style="left:47px;top:386px;font-size:14.670px;line-height:18px;color:#000;">2022</span>
<span class="t" style="left:108px;top:386px;font-size:14.670px;line-height:18px;color:#000;">2T</span>
<span class="t" style="left:291px;top:386px;font-size:14.670px;line-height:18px;color:#000;">845</span>
<span class="t" style="left:352px;top:386px;font-size:14.670px;line-height:18px;color:#000;">F1</span>
<span class="t" style="left:419px;width:90px;text-align:center;top:386px;font-size:14.670px;line-height:18px;color:#000;letter-spacing:-0.150px;">04/04/2022</span>
<span class="t" style="left:686px;top:386px;font-size:14.670px;line-height:18px;color:#000;">1115</span>
<span class="t" style="left:888px;top:386px;font-size:14.670px;line-height:18px;color:#000;">02</span>
<span class="t" style="left:989px;top:386px;font-size:14.670px;line-height:18px;color:#000;">PT</span>
<span class="t" style="left:1090px;top:386px;font-size:14.670px;line-height:18px;color:#000;letter-spacing:-0.150px;">PT505326280</span>
<span class="t" style="left:1191px;top:386px;font-size:14.670px;line-height:18px;color:#000;letter-spacing:-0.650px;">CLEINTE DE JEMPLO</span>
<span class="t" style="left:1338px;width:126px;text-align:right;top:386px;font-size:14.670px;line-height:18px;color:#000;">2.000,00</span>
<span class="t" style="left:1469px;width:126px;text-align:right;top:386px;font-size:14.670px;line-height:18px;color:#000;">2.000,00</span>
<span class="t" style="left:1600px;width:96px;text-align:right;top:386px;font-size:14.670px;line-height:18px;color:#000;">0,00</span>
<span class="t" style="left:1701px;width:126px;text-align:right;top:386px;font-size:14.670px;line-height:18px;color:#000;">0,00</span>
<span class="t" style="left:47px;top:404px;font-size:14.670px;line-height:18px;color:#000;">2022</span>
<span class="t" style="left:108px;top:404px;font-size:14.670px;line-height:18px;color:#000;">2T</span>
<span class="t" style="left:291px;top:404px;font-size:14.670px;line-height:18px;color:#000;">845</span>
<span class="t" style="left:352px;top:404px;font-size:14.670px;line-height:18px;color:#000;">F1</span>
<span class="t" style="left:419px;width:90px;text-align:center;top:404px;font-size:14.670px;line-height:18px;color:#000;letter-spacing:-0.150px;">05/04/2022</span>
<span class="t" style="left:686px;top:404px;font-size:14.670px;line-height:18px;color:#000;">1116</span>
<span class="t" style="left:888px;top:404px;font-size:14.670px;line-height:18px;color:#000;">02</span>
<span class="t" style="left:989px;top:404px;font-size:14.670px;line-height:18px;color:#000;">PT</span>
<span class="t" style="left:1090px;top:404px;font-size:14.670px;line-height:18px;color:#000;letter-spacing:-0.150px;">PT505326280</span>
<span class="t" style="left:1191px;top:404px;font-size:14.670px;line-height:18px;color:#000;letter-spacing:-0.650px;">CLEINTE DE JEMPLO</span>
<span class="t" style="left:1338px;width:126px;text-align:right;top:404px;font-size:14.670px;line-height:18px;color:#000;">1.000,00</span>
<span class="t" style="left:1469px;width:126px;text-align:right;top:404px;font-size:14.670px;line-height:18px;color:#000;">1.000,00</span>
<span class="t" style="left:1600px;width:96px;text-align:right;top:404px;font-size:14.670px;line-height:18px;color:#000;">0,00</span>
<span class="t" style="left:1701px;width:126px;text-align:right;top:404px;font-size:14.670px;line-height:18px;color:#000;">0,00</span>
<span class="t" style="left:47px;top:422px;font-size:14.670px;line-height:18px;color:#000;">2022</span>
<span class="t" style="left:108px;top:422px;font-size:14.670px;line-height:18px;color:#000;">2T</span>
<span class="t" style="left:291px;top:422px;font-size:14.670px;line-height:18px;color:#000;">845</span>
<span class="t" style="left:352px;top:422px;font-size:14.670px;line-height:18px;color:#000;">F1</span>
<span class="t" style="left:419px;width:90px;text-align:center;top:422px;font-size:14.670px;line-height:18px;color:#000;letter-spacing:-0.150px;">05/04/2022</span>
<span class="t" style="left:686px;top:422px;font-size:14.670px;line-height:18px;color:#000;">1116</span>
<span class="t" style="left:888px;top:422px;font-size:14.670px;line-height:18px;color:#000;">02</span>
<span class="t" style="left:989px;top:422px;font-size:14.670px;line-height:18px;color:#000;">PT</span>
<span class="t" style="left:1090px;top:422px;font-size:14.670px;line-height:18px;color:#000;letter-spacing:-0.150px;">PT505326280</span>
<span class="t" style="left:1191px;top:422px;font-size:14.670px;line-height:18px;color:#000;letter-spacing:-0.650px;">CLEINTE DE JEMPLO</span>
<span class="t" style="left:1338px;width:126px;text-align:right;top:422px;font-size:14.670px;line-height:18px;color:#000;">2.000,00</span>
<span class="t" style="left:1469px;width:126px;text-align:right;top:422px;font-size:14.670px;line-height:18px;color:#000;">2.000,00</span>
<span class="t" style="left:1600px;width:96px;text-align:right;top:422px;font-size:14.670px;line-height:18px;color:#000;">0,00</span>
<span class="t" style="left:1701px;width:126px;text-align:right;top:422px;font-size:14.670px;line-height:18px;color:#000;">0,00</span>
<span class="t" style="left:47px;top:440px;font-size:14.670px;line-height:18px;color:#000;">2022</span>
<span class="t" style="left:108px;top:440px;font-size:14.670px;line-height:18px;color:#000;">2T</span>
<span class="t" style="left:291px;top:440px;font-size:14.670px;line-height:18px;color:#000;">845</span>
<span class="t" style="left:352px;top:440px;font-size:14.670px;line-height:18px;color:#000;">F1</span>
<span class="t" style="left:419px;width:90px;text-align:center;top:440px;font-size:14.670px;line-height:18px;color:#000;letter-spacing:-0.150px;">05/04/2022</span>
<span class="t" style="left:686px;top:440px;font-size:14.670px;line-height:18px;color:#000;">1117</span>
<span class="t" style="left:888px;top:440px;font-size:14.670px;line-height:18px;color:#000;">02</span>
<span class="t" style="left:989px;top:440px;font-size:14.670px;line-height:18px;color:#000;">PT</span>
<span class="t" style="left:1090px;top:440px;font-size:14.670px;line-height:18px;color:#000;letter-spacing:-0.150px;">PT505326280</span>
<span class="t" style="left:1191px;top:440px;font-size:14.670px;line-height:18px;color:#000;letter-spacing:-0.650px;">CLEINTE DE JEMPLO</span>
<span class="t" style="left:1338px;width:126px;text-align:right;top:440px;font-size:14.670px;line-height:18px;color:#000;">1.000,00</span>
<span class="t" style="left:1469px;width:126px;text-align:right;top:440px;font-size:14.670px;line-height:18px;color:#000;">1.000,00</span>
<span class="t" style="left:1600px;width:96px;text-align:right;top:440px;font-size:14.670px;line-height:18px;color:#000;">0,00</span>
<span class="t" style="left:1701px;width:126px;text-align:right;top:440px;font-size:14.670px;line-height:18px;color:#000;">0,00</span>
<span class="t" style="left:47px;top:458px;font-size:14.670px;line-height:18px;color:#000;">2022</span>
<span class="t" style="left:108px;top:458px;font-size:14.670px;line-height:18px;color:#000;">2T</span>
<span class="t" style="left:291px;top:458px;font-size:14.670px;line-height:18px;color:#000;">845</span>
<span class="t" style="left:352px;top:458px;font-size:14.670px;line-height:18px;color:#000;">F1</span>
<span class="t" style="left:419px;width:90px;text-align:center;top:458px;font-size:14.670px;line-height:18px;color:#000;letter-spacing:-0.150px;">05/04/2022</span>
<span class="t" style="left:686px;top:458px;font-size:14.670px;line-height:18px;color:#000;">1117</span>
<span class="t" style="left:888px;top:458px;font-size:14.670px;line-height:18px;color:#000;">02</span>
<span class="t" style="left:989px;top:458px;font-size:14.670px;line-height:18px;color:#000;">PT</span>
<span class="t" style="left:1090px;top:458px;font-size:14.670px;line-height:18px;color:#000;letter-spacing:-0.150px;">PT505326280</span>
<span class="t" style="left:1191px;top:458px;font-size:14.670px;line-height:18px;color:#000;letter-spacing:-0.650px;">CLEINTE DE JEMPLO</span>
<span class="t" style="left:1338px;width:126px;text-align:right;top:458px;font-size:14.670px;line-height:18px;color:#000;">2.000,00</span>
<span class="t" style="left:1469px;width:126px;text-align:right;top:458px;font-size:14.670px;line-height:18px;color:#000;">2.000,00</span>
<span class="t" style="left:1600px;width:96px;text-align:right;top:458px;font-size:14.670px;line-height:18px;color:#000;">0,00</span>
<span class="t" style="left:1701px;width:126px;text-align:right;top:458px;font-size:14.670px;line-height:18px;color:#000;">0,00</span>
<span class="t" style="left:47px;top:476px;font-size:14.670px;line-height:18px;color:#000;">2022</span>
<span class="t" style="left:108px;top:476px;font-size:14.670px;line-height:18px;color:#000;">2T</span>
<span class="t" style="left:291px;top:476px;font-size:14.670px;line-height:18px;color:#000;">845</span>
<span class="t" style="left:352px;top:476px;font-size:14.670px;line-height:18px;color:#000;">F1</span>
<span class="t" style="left:419px;width:90px;text-align:center;top:476px;font-size:14.670px;line-height:18px;color:#000;letter-spacing:-0.150px;">05/04/2022</span>
<span class="t" style="left:686px;top:476px;font-size:14.670px;line-height:18px;color:#000;">1120</span>
<span class="t" style="left:888px;top:476px;font-size:14.670px;line-height:18px;color:#000;">02</span>
<span class="t" style="left:989px;top:476px;font-size:14.670px;line-height:18px;color:#000;">PT</span>
<span class="t" style="left:1090px;top:476px;font-size:14.670px;line-height:18px;color:#000;letter-spacing:-0.150px;">PT505326280</span>
<span class="t" style="left:1191px;top:476px;font-size:14.670px;line-height:18px;color:#000;letter-spacing:-0.650px;">CLEINTE DE JEMPLO</span>
<span class="t" style="left:1338px;width:126px;text-align:right;top:476px;font-size:14.670px;line-height:18px;color:#000;">1.000,00</span>
<span class="t" style="left:1469px;width:126px;text-align:right;top:476px;font-size:14.670px;line-height:18px;color:#000;">1.000,00</span>
<span class="t" style="left:1600px;width:96px;text-align:right;top:476px;font-size:14.670px;line-height:18px;color:#000;">0,00</span>
<span class="t" style="left:1701px;width:126px;text-align:right;top:476px;font-size:14.670px;line-height:18px;color:#000;">0,00</span>
<span class="t" style="left:47px;top:494px;font-size:14.670px;line-height:18px;color:#000;">2022</span>
<span class="t" style="left:108px;top:494px;font-size:14.670px;line-height:18px;color:#000;">2T</span>
<span class="t" style="left:291px;top:494px;font-size:14.670px;line-height:18px;color:#000;">845</span>
<span class="t" style="left:352px;top:494px;font-size:14.670px;line-height:18px;color:#000;">F1</span>
<span class="t" style="left:419px;width:90px;text-align:center;top:494px;font-size:14.670px;line-height:18px;color:#000;letter-spacing:-0.150px;">05/04/2022</span>
<span class="t" style="left:686px;top:494px;font-size:14.670px;line-height:18px;color:#000;">1121</span>
<span class="t" style="left:888px;top:494px;font-size:14.670px;line-height:18px;color:#000;">02</span>
<span class="t" style="left:989px;top:494px;font-size:14.670px;line-height:18px;color:#000;">PT</span>
<span class="t" style="left:1090px;top:494px;font-size:14.670px;line-height:18px;color:#000;letter-spacing:-0.150px;">PT505326280</span>
<span class="t" style="left:1191px;top:494px;font-size:14.670px;line-height:18px;color:#000;letter-spacing:-0.650px;">CLEINTE DE JEMPLO</span>
<span class="t" style="left:1338px;width:126px;text-align:right;top:494px;font-size:14.670px;line-height:18px;color:#000;">1.000,00</span>
<span class="t" style="left:1469px;width:126px;text-align:right;top:494px;font-size:14.670px;line-height:18px;color:#000;">1.000,00</span>
<span class="t" style="left:1600px;width:96px;text-align:right;top:494px;font-size:14.670px;line-height:18px;color:#000;">0,00</span>
<span class="t" style="left:1701px;width:126px;text-align:right;top:494px;font-size:14.670px;line-height:18px;color:#000;">0,00</span>
<span class="t" style="left:47px;top:512px;font-size:14.670px;line-height:18px;color:#000;">2022</span>
<span class="t" style="left:108px;top:512px;font-size:14.670px;line-height:18px;color:#000;">2T</span>
<span class="t" style="left:291px;top:512px;font-size:14.670px;line-height:18px;color:#000;">845</span>
<span class="t" style="left:352px;top:512px;font-size:14.670px;line-height:18px;color:#000;">F1</span>
<span class="t" style="left:419px;width:90px;text-align:center;top:512px;font-size:14.670px;line-height:18px;color:#000;letter-spacing:-0.150px;">05/04/2022</span>
<span class="t" style="left:686px;top:512px;font-size:14.670px;line-height:18px;color:#000;">1123</span>
<span class="t" style="left:888px;top:512px;font-size:14.670px;line-height:18px;color:#000;">02</span>
<span class="t" style="left:989px;top:512px;font-size:14.670px;line-height:18px;color:#000;">PT</span>
<span class="t" style="left:1090px;top:512px;font-size:14.670px;line-height:18px;color:#000;letter-spacing:-0.150px;">PT505326280</span>
<span class="t" style="left:1191px;top:512px;font-size:14.670px;line-height:18px;color:#000;letter-spacing:-0.650px;">CLEINTE DE JEMPLO</span>
<span class="t" style="left:1338px;width:126px;text-align:right;top:512px;font-size:14.670px;line-height:18px;color:#000;">1.210,00</span>
<span class="t" style="left:1469px;width:126px;text-align:right;top:512px;font-size:14.670px;line-height:18px;color:#000;">1.000,00</span>
<span class="t" style="left:1600px;width:96px;text-align:right;top:512px;font-size:14.670px;line-height:18px;color:#000;">21,00</span>
<span class="t" style="left:1701px;width:126px;text-align:right;top:512px;font-size:14.670px;line-height:18px;color:#000;">210,00</span>
<span class="t" style="left:47px;top:530px;font-size:14.670px;line-height:18px;color:#000;">2022</span>
<span class="t" style="left:108px;top:530px;font-size:14.670px;line-height:18px;color:#000;">2T</span>
<span class="t" style="left:291px;top:530px;font-size:14.670px;line-height:18px;color:#000;">845</span>
<span class="t" style="left:352px;top:530px;font-size:14.670px;line-height:18px;color:#000;">F1</span>
<span class="t" style="left:419px;width:90px;text-align:center;top:530px;font-size:14.670px;line-height:18px;color:#000;letter-spacing:-0.150px;">07/04/2022</span>
<span class="t" style="left:686px;top:530px;font-size:14.670px;line-height:18px;color:#000;">1125</span>
<span class="t" style="left:888px;top:530px;font-size:14.670px;line-height:18px;color:#000;">02</span>
<span class="t" style="left:989px;top:530px;font-size:14.670px;line-height:18px;color:#000;">PT</span>
<span class="t" style="left:1090px;top:530px;font-size:14.670px;line-height:18px;color:#000;letter-spacing:-0.150px;">PT505326280</span>
<span class="t" style="left:1191px;top:530px;font-size:14.670px;line-height:18px;color:#000;letter-spacing:-0.650px;">CLEINTE DE JEMPLO</span>
<span class="t" style="left:1338px;width:126px;text-align:right;top:530px;font-size:14.670px;line-height:18px;color:#000;">1.000,00</span>
<span class="t" style="left:1469px;width:126px;text-align:right;top:530px;font-size:14.670px;line-height:18px;color:#000;">1.000,00</span>
<span class="t" style="left:1600px;width:96px;text-align:right;top:530px;font-size:14.670px;line-height:18px;color:#000;">0,00</span>
<span class="t" style="left:1701px;width:126px;text-align:right;top:530px;font-size:14.670px;line-height:18px;color:#000;">0,00</span>
<span class="t" style="left:47px;top:548px;font-size:14.670px;line-height:18px;color:#000;">2022</span>
<span class="t" style="left:108px;top:548px;font-size:14.670px;line-height:18px;color:#000;">2T</span>
<span class="t" style="left:291px;top:548px;font-size:14.670px;line-height:18px;color:#000;">845</span>
<span class="t" style="left:352px;top:548px;font-size:14.670px;line-height:18px;color:#000;">F1</span>
<span class="t" style="left:419px;width:90px;text-align:center;top:548px;font-size:14.670px;line-height:18px;color:#000;letter-spacing:-0.150px;">07/04/2022</span>
<span class="t" style="left:686px;top:548px;font-size:14.670px;line-height:18px;color:#000;">1125</span>
<span class="t" style="left:888px;top:548px;font-size:14.670px;line-height:18px;color:#000;">02</span>
<span class="t" style="left:989px;top:548px;font-size:14.670px;line-height:18px;color:#000;">PT</span>
<span class="t" style="left:1090px;top:548px;font-size:14.670px;line-height:18px;color:#000;letter-spacing:-0.150px;">PT505326280</span>
<span class="t" style="left:1191px;top:548px;font-size:14.670px;line-height:18px;color:#000;letter-spacing:-0.650px;">CLEINTE DE JEMPLO</span>
<span class="t" style="left:1338px;width:126px;text-align:right;top:548px;font-size:14.670px;line-height:18px;color:#000;">2.000,00</span>
<span class="t" style="left:1469px;width:126px;text-align:right;top:548px;font-size:14.670px;line-height:18px;color:#000;">2.000,00</span>
<span class="t" style="left:1600px;width:96px;text-align:right;top:548px;font-size:14.670px;line-height:18px;color:#000;">0,00</span>
<span class="t" style="left:1701px;width:126px;text-align:right;top:548px;font-size:14.670px;line-height:18px;color:#000;">0,00</span>
<span class="t" style="left:47px;top:566px;font-size:14.670px;line-height:18px;color:#000;">2022</span>
<span class="t" style="left:108px;top:566px;font-size:14.670px;line-height:18px;color:#000;">2T</span>
<span class="t" style="left:291px;top:566px;font-size:14.670px;line-height:18px;color:#000;">845</span>
<span class="t" style="left:352px;top:566px;font-size:14.670px;line-height:18px;color:#000;">F1</span>
<span class="t" style="left:419px;width:90px;text-align:center;top:566px;font-size:14.670px;line-height:18px;color:#000;letter-spacing:-0.150px;">07/04/2022</span>
<span class="t" style="left:686px;top:566px;font-size:14.670px;line-height:18px;color:#000;">11251</span>
<span class="t" style="left:888px;top:566px;font-size:14.670px;line-height:18px;color:#000;">02</span>
<span class="t" style="left:989px;top:566px;font-size:14.670px;line-height:18px;color:#000;">PT</span>
<span class="t" style="left:1090px;top:566px;font-size:14.670px;line-height:18px;color:#000;letter-spacing:-0.150px;">PT505326280</span>
<span class="t" style="left:1191px;top:566px;font-size:14.670px;line-height:18px;color:#000;letter-spacing:-0.650px;">CLEINTE DE JEMPLO</span>
<span class="t" style="left:1338px;width:126px;text-align:right;top:566px;font-size:14.670px;line-height:18px;color:#000;">1.000,00</span>
<span class="t" style="left:1469px;width:126px;text-align:right;top:566px;font-size:14.670px;line-height:18px;color:#000;">1.000,00</span>
<span class="t" style="left:1600px;width:96px;text-align:right;top:566px;font-size:14.670px;line-height:18px;color:#000;">0,00</span>
<span class="t" style="left:1701px;width:126px;text-align:right;top:566px;font-size:14.670px;line-height:18px;color:#000;">0,00</span>
<span class="t" style="left:47px;top:584px;font-size:14.670px;line-height:18px;color:#000;">2022</span>
<span class="t" style="left:108px;top:584px;font-size:14.670px;line-height:18px;color:#000;">2T</span>
<span class="t" style="left:291px;top:584px;font-size:14.670px;line-height:18px;color:#000;">845</span>
<span class="t" style="left:352px;top:584px;font-size:14.670px;line-height:18px;color:#000;">F1</span>
<span class="t" style="left:419px;width:90px;text-align:center;top:584px;font-size:14.670px;line-height:18px;color:#000;letter-spacing:-0.150px;">07/04/2022</span>
<span class="t" style="left:686px;top:584px;font-size:14.670px;line-height:18px;color:#000;">11251</span>
<span class="t" style="left:888px;top:584px;font-size:14.670px;line-height:18px;color:#000;">02</span>
<span class="t" style="left:989px;top:584px;font-size:14.670px;line-height:18px;color:#000;">PT</span>
<span class="t" style="left:1090px;top:584px;font-size:14.670px;line-height:18px;color:#000;letter-spacing:-0.150px;">PT505326280</span>
<span class="t" style="left:1191px;top:584px;font-size:14.670px;line-height:18px;color:#000;letter-spacing:-0.650px;">CLEINTE DE JEMPLO</span>
<span class="t" style="left:1338px;width:126px;text-align:right;top:584px;font-size:14.670px;line-height:18px;color:#000;">2.000,00</span>
<span class="t" style="left:1469px;width:126px;text-align:right;top:584px;font-size:14.670px;line-height:18px;color:#000;">2.000,00</span>
<span class="t" style="left:1600px;width:96px;text-align:right;top:584px;font-size:14.670px;line-height:18px;color:#000;">0,00</span>
<span class="t" style="left:1701px;width:126px;text-align:right;top:584px;font-size:14.670px;line-height:18px;color:#000;">0,00</span>
<span class="t" style="left:47px;top:602px;font-size:14.670px;line-height:18px;color:#000;">2022</span>
<span class="t" style="left:108px;top:602px;font-size:14.670px;line-height:18px;color:#000;">2T</span>
<span class="t" style="left:291px;top:602px;font-size:14.670px;line-height:18px;color:#000;">845</span>
<span class="t" style="left:352px;top:602px;font-size:14.670px;line-height:18px;color:#000;">F1</span>
<span class="t" style="left:419px;width:90px;text-align:center;top:602px;font-size:14.670px;line-height:18px;color:#000;letter-spacing:-0.150px;">07/04/2022</span>
<span class="t" style="left:686px;top:602px;font-size:14.670px;line-height:18px;color:#000;">11252</span>
<span class="t" style="left:888px;top:602px;font-size:14.670px;line-height:18px;color:#000;">02</span>
<span class="t" style="left:989px;top:602px;font-size:14.670px;line-height:18px;color:#000;">PT</span>
<span class="t" style="left:1090px;top:602px;font-size:14.670px;line-height:18px;color:#000;letter-spacing:-0.150px;">PT505326280</span>
<span class="t" style="left:1191px;top:602px;font-size:14.670px;line-height:18px;color:#000;letter-spacing:-0.650px;">CLEINTE DE JEMPLO</span>
<span class="t" style="left:1338px;width:126px;text-align:right;top:602px;font-size:14.670px;line-height:18px;color:#000;">1.000,00</span>
<span class="t" style="left:1469px;width:126px;text-align:right;top:602px;font-size:14.670px;line-height:18px;color:#000;">1.000,00</span>
<span class="t" style="left:1600px;width:96px;text-align:right;top:602px;font-size:14.670px;line-height:18px;color:#000;">0,00</span>
<span class="t" style="left:1701px;width:126px;text-align:right;top:602px;font-size:14.670px;line-height:18px;color:#000;">0,00</span>
<span class="t" style="left:47px;top:620px;font-size:14.670px;line-height:18px;color:#000;">2022</span>
<span class="t" style="left:108px;top:620px;font-size:14.670px;line-height:18px;color:#000;">2T</span>
<span class="t" style="left:291px;top:620px;font-size:14.670px;line-height:18px;color:#000;">845</span>
<span class="t" style="left:352px;top:620px;font-size:14.670px;line-height:18px;color:#000;">F1</span>
<span class="t" style="left:419px;width:90px;text-align:center;top:620px;font-size:14.670px;line-height:18px;color:#000;letter-spacing:-0.150px;">07/04/2022</span>
<span class="t" style="left:686px;top:620px;font-size:14.670px;line-height:18px;color:#000;">11252</span>
<span class="t" style="left:888px;top:620px;font-size:14.670px;line-height:18px;color:#000;">02</span>
<span class="t" style="left:989px;top:620px;font-size:14.670px;line-height:18px;color:#000;">PT</span>
<span class="t" style="left:1090px;top:620px;font-size:14.670px;line-height:18px;color:#000;letter-spacing:-0.150px;">PT505326280</span>
<span class="t" style="left:1191px;top:620px;font-size:14.670px;line-height:18px;color:#000;letter-spacing:-0.650px;">CLEINTE DE JEMPLO</span>
<span class="t" style="left:1338px;width:126px;text-align:right;top:620px;font-size:14.670px;line-height:18px;color:#000;">2.000,00</span>
<span class="t" style="left:1469px;width:126px;text-align:right;top:620px;font-size:14.670px;line-height:18px;color:#000;">2.000,00</span>
<span class="t" style="left:1600px;width:96px;text-align:right;top:620px;font-size:14.670px;line-height:18px;color:#000;">0,00</span>
<span class="t" style="left:1701px;width:126px;text-align:right;top:620px;font-size:14.670px;line-height:18px;color:#000;">0,00</span>
<span class="t" style="left:47px;top:638px;font-size:14.670px;line-height:18px;color:#000;">2022</span>
<span class="t" style="left:108px;top:638px;font-size:14.670px;line-height:18px;color:#000;">2T</span>
<span class="t" style="left:291px;top:638px;font-size:14.670px;line-height:18px;color:#000;">845</span>
<span class="t" style="left:352px;top:638px;font-size:14.670px;line-height:18px;color:#000;">F1</span>
<span class="t" style="left:419px;width:90px;text-align:center;top:638px;font-size:14.670px;line-height:18px;color:#000;letter-spacing:-0.150px;">05/04/2022</span>
<span class="t" style="left:686px;top:638px;font-size:14.670px;line-height:18px;color:#000;">1126</span>
<span class="t" style="left:888px;top:638px;font-size:14.670px;line-height:18px;color:#000;">02</span>
<span class="t" style="left:989px;top:638px;font-size:14.670px;line-height:18px;color:#000;">PT</span>
<span class="t" style="left:1090px;top:638px;font-size:14.670px;line-height:18px;color:#000;letter-spacing:-0.150px;">PT505326280</span>
<span class="t" style="left:1191px;top:638px;font-size:14.670px;line-height:18px;color:#000;letter-spacing:-0.650px;">CLEINTE DE JEMPLO</span>
<span class="t" style="left:1338px;width:126px;text-align:right;top:638px;font-size:14.670px;line-height:18px;color:#000;">1.100,00</span>
<span class="t" style="left:1469px;width:126px;text-align:right;top:638px;font-size:14.670px;line-height:18px;color:#000;">1.000,00</span>
<span class="t" style="left:1600px;width:96px;text-align:right;top:638px;font-size:14.670px;line-height:18px;color:#000;">10,00</span>
<span class="t" style="left:1701px;width:126px;text-align:right;top:638px;font-size:14.670px;line-height:18px;color:#000;">100,00</span>
<span class="t" style="left:47px;top:656px;font-size:14.670px;line-height:18px;color:#000;">2022</span>
<span class="t" style="left:108px;top:656px;font-size:14.670px;line-height:18px;color:#000;">2T</span>
<span class="t" style="left:291px;top:656px;font-size:14.670px;line-height:18px;color:#000;">845</span>
<span class="t" style="left:352px;top:656px;font-size:14.670px;line-height:18px;color:#000;">F1</span>
<span class="t" style="left:419px;width:90px;text-align:center;top:656px;font-size:14.670px;line-height:18px;color:#000;letter-spacing:-0.150px;">05/04/2022</span>
<span class="t" style="left:686px;top:656px;font-size:14.670px;line-height:18px;color:#000;">1126</span>
<span class="t" style="left:888px;top:656px;font-size:14.670px;line-height:18px;color:#000;">02</span>
<span class="t" style="left:989px;top:656px;font-size:14.670px;line-height:18px;color:#000;">PT</span>
<span class="t" style="left:1090px;top:656px;font-size:14.670px;line-height:18px;color:#000;letter-spacing:-0.150px;">PT505326280</span>
<span class="t" style="left:1191px;top:656px;font-size:14.670px;line-height:18px;color:#000;letter-spacing:-0.650px;">CLEINTE DE JEMPLO</span>
<span class="t" style="left:1338px;width:126px;text-align:right;top:656px;font-size:14.670px;line-height:18px;color:#000;">121,00</span>
<span class="t" style="left:1469px;width:126px;text-align:right;top:656px;font-size:14.670px;line-height:18px;color:#000;">100,00</span>
<span class="t" style="left:1600px;width:96px;text-align:right;top:656px;font-size:14.670px;line-height:18px;color:#000;">21,00</span>
<span class="t" style="left:1701px;width:126px;text-align:right;top:656px;font-size:14.670px;line-height:18px;color:#000;">21,00</span>
<span class="t" style="left:47px;top:674px;font-size:14.670px;line-height:18px;color:#000;">2022</span>
<span class="t" style="left:108px;top:674px;font-size:14.670px;line-height:18px;color:#000;">2T</span>
<span class="t" style="left:291px;top:674px;font-size:14.670px;line-height:18px;color:#000;">845</span>
<span class="t" style="left:352px;top:674px;font-size:14.670px;line-height:18px;color:#000;">F1</span>
<span class="t" style="left:419px;width:90px;text-align:center;top:674px;font-size:14.670px;line-height:18px;color:#000;letter-spacing:-0.150px;">05/04/2022</span>
<span class="t" style="left:686px;top:674px;font-size:14.670px;line-height:18px;color:#000;">1129</span>
<span class="t" style="left:888px;top:674px;font-size:14.670px;line-height:18px;color:#000;">02</span>
<span class="t" style="left:989px;top:674px;font-size:14.670px;line-height:18px;color:#000;">PT</span>
<span class="t" style="left:1090px;top:674px;font-size:14.670px;line-height:18px;color:#000;letter-spacing:-0.150px;">PT505326280</span>
<span class="t" style="left:1191px;top:674px;font-size:14.670px;line-height:18px;color:#000;letter-spacing:-0.650px;">CLEINTE DE JEMPLO</span>
<span class="t" style="left:1338px;width:126px;text-align:right;top:674px;font-size:14.670px;line-height:18px;color:#000;">1.000,00</span>
<span class="t" style="left:1469px;width:126px;text-align:right;top:674px;font-size:14.670px;line-height:18px;color:#000;">1.000,00</span>
<span class="t" style="left:1600px;width:96px;text-align:right;top:674px;font-size:14.670px;line-height:18px;color:#000;">0,00</span>
<span class="t" style="left:1701px;width:126px;text-align:right;top:674px;font-size:14.670px;line-height:18px;color:#000;">0,00</span>
<span class="t" style="left:47px;top:692px;font-size:14.670px;line-height:18px;color:#000;">2022</span>
<span class="t" style="left:108px;top:692px;font-size:14.670px;line-height:18px;color:#000;">2T</span>
<span class="t" style="left:291px;top:692px;font-size:14.670px;line-height:18px;color:#000;">845</span>
<span class="t" style="left:352px;top:692px;font-size:14.670px;line-height:18px;color:#000;">F1</span>
<span class="t" style="left:419px;width:90px;text-align:center;top:692px;font-size:14.670px;line-height:18px;color:#000;letter-spacing:-0.150px;">05/04/2022</span>
<span class="t" style="left:686px;top:692px;font-size:14.670px;line-height:18px;color:#000;">1130</span>
<span class="t" style="left:888px;top:692px;font-size:14.670px;line-height:18px;color:#000;">02</span>
<span class="t" style="left:989px;top:692px;font-size:14.670px;line-height:18px;color:#000;">PT</span>
<span class="t" style="left:1090px;top:692px;font-size:14.670px;line-height:18px;color:#000;letter-spacing:-0.150px;">PT505326280</span>
<span class="t" style="left:1191px;top:692px;font-size:14.670px;line-height:18px;color:#000;letter-spacing:-0.650px;">CLEINTE DE JEMPLO</span>
<span class="t" style="left:1338px;width:126px;text-align:right;top:692px;font-size:14.670px;line-height:18px;color:#000;">1.000,00</span>
<span class="t" style="left:1469px;width:126px;text-align:right;top:692px;font-size:14.670px;line-height:18px;color:#000;">1.000,00</span>
<span class="t" style="left:1600px;width:96px;text-align:right;top:692px;font-size:14.670px;line-height:18px;color:#000;">0,00</span>
<span class="t" style="left:1701px;width:126px;text-align:right;top:692px;font-size:14.670px;line-height:18px;color:#000;">0,00</span>
<div class="abs" style="left:43px;top:912px;width:1854px;height:16px;overflow:hidden;">
<span class="t" style="left:1295px;width:126.5px;text-align:right;top:0.500px;font-size:15px;line-height:18px;font-weight:bold;color:#000;letter-spacing:0.750px;">28.431,00</span>
<span class="t" style="left:1426px;width:126.5px;text-align:right;top:0.500px;font-size:15px;line-height:18px;font-weight:bold;color:#000;letter-spacing:0.750px;">28.100,00</span>
<span class="t" style="left:1658px;width:126.5px;text-align:right;top:0.500px;font-size:15px;line-height:18px;font-weight:bold;color:#000;letter-spacing:0.750px;">331,00</span>
</div>
<div class="" style="position:absolute;left:22px;top:930px;width:1875px;height:20px;background:#f0f0f0;"></div>
<div class="" style="position:absolute;left:43px;top:930px;width:1798px;height:20px;background:#cdcdcd;"></div>
<svg width="1876" height="20" viewBox="22 930 1876 20" style="left:22px;top:930px" fill="none" stroke="#404040" stroke-width="1.800"><path d="M36 935.500l-4.500 4.500 4.500 4.500 M1884 935.500l4.500 4.500-4.500 4.500"/></svg>
<div class="" style="position:absolute;left:14px;top:955px;width:1888px;height:39px;background:linear-gradient(#fbfbfb 0%,#f6f6f6 50%,#ebebeb 100%);border-radius:0 3px 3px 0;"></div>
<div class="" style="position:absolute;left:14px;top:994px;width:1888px;height:1px;background:#dcdcdc;"></div>
<div class="" style="position:absolute;left:6px;top:1000px;width:1903px;height:1px;background:#e2e2e2;"></div>
<div class="" style="position:absolute;left:6px;top:1001px;width:1903px;height:1px;background:#fff;"></div>
<svg width="470" height="40" viewBox="0 955 470 40" style="left:0;top:955px" fill="none"><path d="M21 960v26" stroke="#b5b5b5" stroke-width="1.600" stroke-dasharray="1.600 2.100"/><path d="M77.500 960v27 M196.500 960v27 M250.500 960v27" stroke="#c9c9c9" stroke-width="1"/><path d="M31 965.500h3v14.500h-3z M43 965.500v14.500l-8.500-7.250z M66.500 965.500v14.500l-8.500-7.250z" fill="#b9b9b9"/><path d="M205.500 965.500v14.500l8.200-7.250z M228.500 965.500v14.500l8.200-7.250z M238.300 965.500h3v14.500h-3z" fill="#1c6fe0"/><defs><linearGradient id="sv" x1="0" y1="0" x2="1" y2="1"><stop offset="0" stop-color="#7a78e0"/><stop offset="1" stop-color="#2f2aa8"/></linearGradient><linearGradient id="sl" x1="0" y1="0" x2="1" y2="1"><stop offset="0" stop-color="#ffffff"/><stop offset="1" stop-color="#b8bcd8"/></linearGradient></defs><path d="M256.500 964.500h16.500l1 1v15.500h-17.500z" fill="url(#sv)"/><path d="M259.300 964.500h11.200v8h-11.200z" fill="url(#sl)"/><path d="M260 975h10v6h-10z" fill="#26264a"/><path d="M261.700 976.300h3v3.700h-3z" fill="#e6e6f2"/></svg>
<div class="" style="position:absolute;left:81px;top:960px;width:65px;height:27px;background:#fff;"></div>
<span class="t " style="left:84.0px;top:963.5px;font-size:16px;line-height:20px;color:#000;">1</span>
<span class="t " style="left:151.0px;top:963.5px;font-size:16px;line-height:20px;color:#000;letter-spacing:-0.708px;">de 23</span>
<span class="t " style="left:279.0px;top:963.5px;font-size:16px;line-height:20px;color:#000;letter-spacing:-0.484px;">Generar los libros registro</span>
<div class="" style="position:absolute;left:0px;top:1002px;width:1920px;height:1px;background:#f7f7f7;"></div>
<div class="" style="position:absolute;left:0px;top:1003px;width:1920px;height:28px;background:#00796b;"></div>
<span class="t " style="left:3.0px;top:1008.0px;font-size:14px;line-height:18px;color:#fff;letter-spacing:-0.212px;">SB-2022</span>
<span class="t " style="left:75.8px;top:1008.0px;font-size:14px;line-height:18px;color:#fff;letter-spacing:-0.930px;">SBSS CONSULTING, S.A.</span>
<span class="t " style="left:242.0px;top:1008.0px;font-size:14px;line-height:18px;color:#fff;letter-spacing:-0.477px;">PROFESIONAL 2022.10</span>
<span class="t " style="left:478.0px;top:1008.0px;font-size:14px;line-height:18px;color:#fff;letter-spacing:-0.534px;">ADMINISTRADOR</span>
<span class="t " style="left:1665.5px;top:1008.0px;font-size:14px;line-height:18px;color:#8fc7bd;letter-spacing:-0.372px;">Proceso en curso</span>
<div class="" style="position:absolute;left:1775px;top:1008px;width:125px;height:17px;border:1px solid #cfe6e1;box-sizing:border-box;"></div>
<svg width="18" height="20" viewBox="0 0 18 20" style="left:438px;top:1006px"><rect x="1" y="1.500" width="16" height="16" rx="3" fill="#1f8fe8"/><circle cx="9" cy="9.500" r="5.600" fill="#fff"/><path d="M4.600 9.500l3-2.200v1.400h2.800v-1.400l3 2.200-3 2.200v-1.400h-2.800v1.400z" fill="#1f8fe8"/></svg>
<div class="" style="position:absolute;left:0px;top:1029px;width:60px;height:2px;background:#1d3f3a;"></div>
<div class="" style="position:absolute;left:843px;top:397px;width:506px;height:469px;background:#f0f0f0;border:1px solid #868686;box-sizing:border-box;box-shadow:0 6px 20px rgba(0,0,0,.40),0 0 8px rgba(0,0,0,.22);"></div>
<div class="" style="position:absolute;left:844px;top:398px;width:504px;height:37px;background:#fff;"></div>
<div class="" style="position:absolute;left:853px;top:406px;width:20px;height:20px;border-radius:4px;background:linear-gradient(215deg,#25d0f7 0%,#1aa6ee 45%,#1461d6 100%);"></div>
<span class="t " style="left:854.7px;top:408.5px;font-size:13px;line-height:15px;color:#fff;letter-spacing:-0.271px;-webkit-text-stroke:0.250px #fff;">SB</span>
<span class="t " style="left:878.0px;top:406.5px;font-size:15.5px;line-height:20px;color:#000;letter-spacing:-0.273px;">Generación de los libros de registro para atender a requerimie...</span>
<svg width="16" height="16" viewBox="1319 408 16 16" style="left:1319px;top:408px" fill="none" stroke="#111" stroke-width="1.150"><path d="M1321 410.200l12 11.800 M1333 410.200l-12 11.800"/></svg>
<div class="" style="position:absolute;left:847px;top:445px;width:489px;height:46px;border:1px solid #dcdcdc;box-sizing:border-box;box-shadow:inset 1px 1px 0 #fbfbfb,1px 1px 0 #fbfbfb;"></div>
<div class="" style="position:absolute;left:854.5px;top:438.5px;width:60.5px;height:18px;background:#f0f0f0;"></div>
<span class="t " style="left:856.0px;top:438.5px;font-size:15px;line-height:18px;color:#000;letter-spacing:0.094px;font-weight:bold;">Periodo</span>
<div class="" style="position:absolute;left:856px;top:459px;width:474px;height:24px;background:#e1e1e1;border:1px solid #adadad;box-sizing:border-box;"></div>
<span class="t " style="left:861.0px;top:462.3px;font-size:14.5px;line-height:18px;color:#000;letter-spacing:0.061px;">Todos</span>
<svg width="14" height="10" viewBox="1313 466 14 10" style="left:1313px;top:466px" fill="none" stroke="#333" stroke-width="1.200"><path d="M1315.500 468.500l4.500 4.500 4.500-4.500"/></svg>
<div class="" style="position:absolute;left:847px;top:507px;width:489px;height:216px;border:1px solid #dcdcdc;box-sizing:border-box;box-shadow:inset 1px 1px 0 #fbfbfb,1px 1px 0 #fbfbfb;"></div>
<div class="" style="position:absolute;left:855.5px;top:499.5px;width:210.0px;height:18px;background:#f0f0f0;"></div>
<span class="t " style="left:857.0px;top:499.5px;font-size:15px;line-height:18px;color:#000;letter-spacing:0.241px;font-weight:bold;">Libros de registro a generar</span>
<div class="" style="position:absolute;left:856px;top:524px;width:16px;height:16px;background:#fff;border:1px solid #333;box-sizing:border-box;"></div>
<svg width="16" height="16" style="left:856px;top:524px" fill="none" stroke="#333" stroke-width="1.300"><path d="M3.300 8.200l3 3 6.200-6.600"/></svg>
<span class="t " style="left:878.2px;top:523.3px;font-size:14.5px;line-height:18px;color:#000;letter-spacing:-0.180px;">Facturas expedidas</span>
<div class="" style="position:absolute;left:856px;top:553px;width:16px;height:16px;background:#fff;border:1px solid #333;box-sizing:border-box;"></div>
<svg width="16" height="16" style="left:856px;top:553px" fill="none" stroke="#333" stroke-width="1.300"><path d="M3.300 8.200l3 3 6.200-6.600"/></svg>
<span class="t " style="left:878.2px;top:552.3px;font-size:14.5px;line-height:18px;color:#000;letter-spacing:-0.120px;">Facturas recibidas</span>
<div class="" style="position:absolute;left:856px;top:581px;width:16px;height:16px;background:#fff;border:1px solid #333;box-sizing:border-box;"></div>
<svg width="16" height="16" style="left:856px;top:581px" fill="none" stroke="#333" stroke-width="1.300"><path d="M3.300 8.200l3 3 6.200-6.600"/></svg>
<span class="t " style="left:878.2px;top:580.3px;font-size:14.5px;line-height:18px;color:#000;letter-spacing:-0.189px;">Ingresos</span>
<div class="" style="position:absolute;left:856px;top:609px;width:16px;height:16px;background:#fff;border:1px solid #333;box-sizing:border-box;"></div>
<svg width="16" height="16" style="left:856px;top:609px" fill="none" stroke="#333" stroke-width="1.300"><path d="M3.300 8.200l3 3 6.200-6.600"/></svg>
<span class="t " style="left:878.2px;top:608.3px;font-size:14.5px;line-height:18px;color:#000;letter-spacing:-0.106px;">Gastos</span>
<div class="" style="position:absolute;left:856px;top:638px;width:16px;height:16px;background:#fff;border:1px solid #333;box-sizing:border-box;"></div>
<svg width="16" height="16" style="left:856px;top:638px" fill="none" stroke="#333" stroke-width="1.300"><path d="M3.300 8.200l3 3 6.200-6.600"/></svg>
<span class="t " style="left:878.2px;top:637.3px;font-size:14.5px;line-height:18px;color:#000;letter-spacing:-0.149px;">Bienes de inversión (IVA)</span>
<div class="" style="position:absolute;left:856px;top:666px;width:16px;height:16px;background:#fff;border:1px solid #333;box-sizing:border-box;"></div>
<svg width="16" height="16" style="left:856px;top:666px" fill="none" stroke="#333" stroke-width="1.300"><path d="M3.300 8.200l3 3 6.200-6.600"/></svg>
<span class="t " style="left:878.2px;top:665.3px;font-size:14.5px;line-height:18px;color:#000;letter-spacing:-0.199px;">Bienes de inversión (IRPF)</span>
<div class="" style="position:absolute;left:856px;top:695px;width:16px;height:16px;background:#fff;border:1px solid #333;box-sizing:border-box;"></div>
<svg width="16" height="16" style="left:856px;top:695px" fill="none" stroke="#333" stroke-width="1.300"><path d="M3.300 8.200l3 3 6.200-6.600"/></svg>
<span class="t " style="left:878.2px;top:694.3px;font-size:14.5px;line-height:18px;color:#000;letter-spacing:-0.090px;">Libro de registro de IVA (formato importación Pre303)</span>
<div class="" style="position:absolute;left:847px;top:740px;width:493px;height:49px;border:1px solid #dcdcdc;box-sizing:border-box;box-shadow:inset 1px 1px 0 #fbfbfb,1px 1px 0 #fbfbfb;"></div>
<div class="" style="position:absolute;left:855.5px;top:732.5px;width:263.5px;height:18px;background:#f0f0f0;"></div>
<span class="t " style="left:857.0px;top:732.5px;font-size:15px;line-height:18px;color:#000;letter-spacing:0.173px;font-weight:bold;">Ubicación de los ficheros a generar</span>
<div class="" style="position:absolute;left:856px;top:755px;width:422px;height:23px;background:#fff;border:1px solid #7a7a7a;box-sizing:border-box;"></div>
<span class="t " style="left:859.0px;top:758.2px;font-size:14.5px;line-height:18px;color:#000;letter-spacing:-0.358px;">C:\WORK\</span>
<div class="" style="position:absolute;left:1287px;top:754px;width:42px;height:25px;background:#e1e1e1;border:1px solid #adadad;box-sizing:border-box;"></div>
<svg width="16" height="16" viewBox="1300 758 16 16" style="left:1300px;top:758px"><path d="M1312 758h4v16h-16v-5h12z" fill="#cfcfcf"/><rect x="1300" y="758" width="11.200" height="10" fill="#0a0aa0"/><rect x="1301.200" y="761.400" width="9" height="5.800" fill="#fff"/><path d="M1301 759.600h1 M1303.600 759.600h1 M1305.600 759.600h2 M1308.800 759.600h1" stroke="#e8e8ff" stroke-width="0.800"/><path d="M1303 771.800v-3.500l2-5 1.300-1.100 1.300 1.100.8 2.500h.9l.8-2.500 1.300-1.100 1.300 1.100 1.300 5v3.500h-3.600v-2h-3.100v2z" fill="#050505"/><rect x="1307" y="769.800" width="3" height="2" fill="#a2a21e"/><path d="M1304.500 768.500v2 M1312.500 768.500v2" stroke="#ddd" stroke-width="0.600"/></svg>
<div class="" style="position:absolute;left:1076px;top:806px;width:264px;height:50px;border:1px solid #dcdcdc;box-sizing:border-box;box-shadow:inset 1px 1px 0 #fbfbfb,1px 1px 0 #fbfbfb;"></div>
<div class="" style="position:absolute;left:1083.5px;top:798.5px;width:69.5px;height:18px;background:#f0f0f0;"></div>
<span class="t " style="left:1085.0px;top:798.5px;font-size:15px;line-height:18px;color:#000;letter-spacing:-0.150px;font-weight:bold;">Acciones</span>
<div class="" style="position:absolute;left:1085px;top:822px;width:117px;height:26px;background:#e1e1e1;border:1px solid #adadad;box-sizing:border-box;"></div>
<div class="" style="position:absolute;left:1212px;top:822px;width:117px;height:26px;background:#e1e1e1;border:1px solid #adadad;box-sizing:border-box;"></div>
<span class="t " style="left:1117.5px;top:826.8px;font-size:14.5px;line-height:18px;color:#000;letter-spacing:-0.039px;">Aceptar</span>
<span class="t " style="left:1240.5px;top:826.8px;font-size:14.5px;line-height:18px;color:#000;letter-spacing:-0.129px;">Cancelar</span>
</body></html>
